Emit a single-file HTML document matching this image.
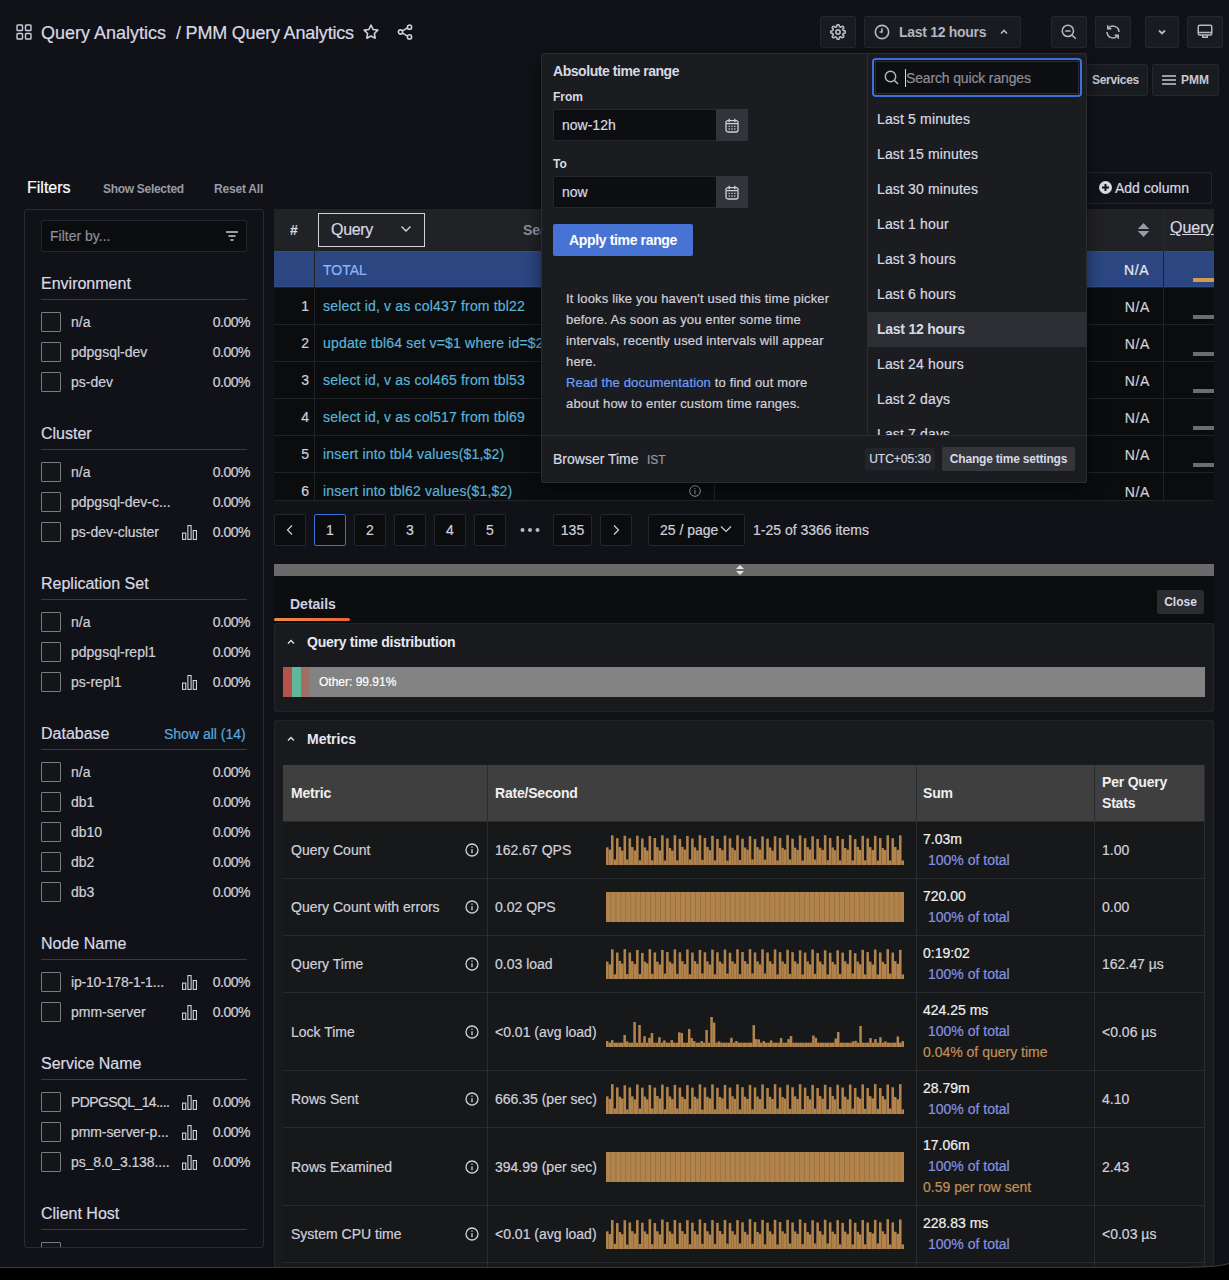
<!DOCTYPE html><html><head><meta charset="utf-8"><style>
*{box-sizing:border-box;margin:0;padding:0}
html,body{width:1229px;height:1280px;overflow:hidden;background:#111217;font-family:"Liberation Sans",sans-serif;color:#ccccdc;}
.a{position:absolute;white-space:nowrap}
.btn{position:absolute;background:#181b1f;border:1px solid #25272c;border-radius:2px}
svg{display:block;position:absolute}
.cb{position:absolute;width:20px;height:20px;border:1px solid #7a7b80;background:#141517;border-radius:1px}
.ft{position:absolute;font-size:14px;color:#d0d0da}
.pct{position:absolute;font-size:14px;color:#d0d0da;text-align:right;width:60px;letter-spacing:-0.5px}
.sh{position:absolute;font-size:16px;color:#d8d9e3}
.ul{position:absolute;height:1px;background:#3a3c42;width:206px;left:41px}
.pg{position:absolute;top:514px;height:32px;border:1px solid #25272c;background:#0b0c0e;border-radius:2px;font-size:14px;color:#d0d0da;text-align:center;line-height:30px}
.row{position:absolute;left:274px;width:940px;height:37px;border-top:1px solid #202226;background:#0b0c0e}
.q{position:absolute;left:49px;top:10px;font-size:14px;color:#5ab3d8;letter-spacing:0.18px}
.num{position:absolute;left:0;width:35px;text-align:right;top:10px;font-size:14px;color:#d0d0da}
.na{position:absolute;left:838px;width:38px;text-align:right;top:11px;font-size:14px;color:#d0d0da;letter-spacing:0.6px}
.mrow{position:absolute;left:283px;width:922px;border-top:1px solid #2a2b2e;background:#17181a}
.mt{position:absolute;font-size:14px;color:#d0d0da}
.qr{position:absolute;left:877px;font-size:14px;color:#d0d0da}
body *{-webkit-text-stroke:0.2px currentColor}
[style*="bold"]{-webkit-text-stroke:0}
</style></head><body>
<svg style="left:16px;top:24px" width="16" height="16" viewBox="0 0 16 16" fill="none" stroke="#ccccdc" stroke-width="1.4"><rect x="1" y="1" width="5.5" height="5.5" rx=".8"/><rect x="9.5" y="1" width="5.5" height="5.5" rx=".8"/><rect x="1" y="9.5" width="5.5" height="5.5" rx=".8"/><rect x="9.5" y="9.5" width="5.5" height="5.5" rx=".8"/></svg>
<div class="a" style="left:41px;top:23px;font-size:18px;color:#d8d9e3">Query Analytics</div>
<div class="a" style="left:176px;top:23px;font-size:18px;color:#d8d9e3;letter-spacing:-0.2px">/ PMM Query Analytics</div>
<svg style="left:362px;top:23px" width="18" height="18" viewBox="0 0 24 24" fill="none" stroke="#d0d0dc" stroke-width="2.1" stroke-linejoin="round"><path d="M12 2.8l2.8 5.8 6.3.9-4.6 4.5 1.1 6.3L12 17.3l-5.6 3 1.1-6.3L2.9 9.5l6.3-.9z"/></svg>
<svg style="left:396px;top:23px" width="18" height="18" viewBox="0 0 24 24" fill="none" stroke="#d0d0dc" stroke-width="2.1"><circle cx="18" cy="5.5" r="2.8"/><circle cx="6" cy="12" r="2.8"/><circle cx="18" cy="18.5" r="2.8"/><path d="M8.6 10.5l6.8-4M8.6 13.5l6.8 4"/></svg>
<div class="btn" style="left:820px;top:16px;width:36px;height:32px"></div>
<svg style="left:830px;top:24px" width="16" height="16" viewBox="0 0 24 24" fill="none" stroke="#b8b8c4" stroke-width="2.5"><circle cx="12" cy="12" r="3.2"/><path d="M19.4 15a1.7 1.7 0 0 0 .3 1.8l.1.1a2 2 0 1 1-2.8 2.8l-.1-.1a1.7 1.7 0 0 0-1.8-.3 1.7 1.7 0 0 0-1 1.5V21a2 2 0 1 1-4 0v-.1a1.7 1.7 0 0 0-1.1-1.5 1.7 1.7 0 0 0-1.8.3l-.1.1a2 2 0 1 1-2.8-2.8l.1-.1a1.7 1.7 0 0 0 .3-1.8 1.7 1.7 0 0 0-1.5-1H3a2 2 0 1 1 0-4h.1a1.7 1.7 0 0 0 1.5-1.1 1.7 1.7 0 0 0-.3-1.8l-.1-.1a2 2 0 1 1 2.8-2.8l.1.1a1.7 1.7 0 0 0 1.8.3H9a1.7 1.7 0 0 0 1-1.5V3a2 2 0 1 1 4 0v.1a1.7 1.7 0 0 0 1 1.5 1.7 1.7 0 0 0 1.8-.3l.1-.1a2 2 0 1 1 2.8 2.8l-.1.1a1.7 1.7 0 0 0-.3 1.8V9a1.7 1.7 0 0 0 1.5 1H21a2 2 0 1 1 0 4h-.1a1.7 1.7 0 0 0-1.5 1z"/></svg>
<div class="btn" style="left:864px;top:16px;width:157px;height:32px"></div>
<svg style="left:874px;top:24px" width="16" height="16" viewBox="0 0 24 24" fill="none" stroke="#b8b8c4" stroke-width="2.4"><circle cx="12" cy="12" r="10"/><path d="M12 6.5V12h-3.5"/></svg>
<div class="a" style="left:899px;top:24px;font-size:14px;font-weight:bold;color:#b4b4be;letter-spacing:-0.3px">Last 12 hours</div>
<svg style="left:998px;top:27px" width="12" height="10" viewBox="0 0 12 10" fill="none" stroke="#b8b8c4" stroke-width="1.6"><path d="M3 6.5l3-3 3 3"/></svg>
<div class="btn" style="left:1051px;top:16px;width:36px;height:32px"></div>
<svg style="left:1060px;top:23px" width="18" height="18" viewBox="0 0 24 24" fill="none" stroke="#b8b8c4" stroke-width="2"><circle cx="10.5" cy="10.5" r="7.5"/><path d="M7 10.5h7M16 16l5 5"/></svg>
<div class="btn" style="left:1095px;top:16px;width:36px;height:32px"></div>
<svg style="left:1104px;top:23px" width="18" height="18" viewBox="0 0 24 24" fill="none" stroke="#b8b8c4" stroke-width="2"><path d="M5.5 7.5A8 8 0 0 1 20 12M18.5 16.5A8 8 0 0 1 4 12"/><path d="M5 3v4.8h4.8M19 21v-4.8h-4.8"/></svg>
<div class="btn" style="left:1145px;top:16px;width:34px;height:32px"></div>
<svg style="left:1156px;top:27px" width="12" height="10" viewBox="0 0 12 10" fill="none" stroke="#b8b8c4" stroke-width="1.8"><path d="M3 3.5l3 3 3-3"/></svg>
<div class="btn" style="left:1187px;top:16px;width:36px;height:32px"></div>
<svg style="left:1196px;top:23px" width="18" height="18" viewBox="0 0 24 24" fill="none" stroke="#b8b8c4" stroke-width="2"><rect x="3" y="3" width="18" height="13" rx="2"/><path d="M3 12.5h18M9 16v3h6v-3"/></svg>
<div class="btn" style="left:1080px;top:64px;width:68px;height:32px"></div>
<div class="a" style="left:1092px;top:73px;font-size:12px;font-weight:bold;color:#c8c8d2;letter-spacing:-0.3px">Services</div>
<div class="btn" style="left:1152px;top:64px;width:67px;height:32px"></div>
<svg style="left:1162px;top:74px" width="14" height="12" viewBox="0 0 14 12" fill="none" stroke="#c8c8d2" stroke-width="1.4"><path d="M0 2h14M0 6h14M0 10h14"/></svg>
<div class="a" style="left:1181px;top:73px;font-size:12px;font-weight:bold;color:#c8c8d2">PMM</div>
<div class="a" style="left:27px;top:179px;font-size:16px;color:#fff">Filters</div>
<div class="a" style="left:103px;top:182px;font-size:12px;font-weight:bold;color:#9a9aa6;letter-spacing:-0.3px">Show Selected</div>
<div class="a" style="left:214px;top:182px;font-size:12px;font-weight:bold;color:#9a9aa6;letter-spacing:-0.2px">Reset All</div>
<div class="a" style="left:24px;top:209px;width:240px;height:1039px;border:1px solid #2a2b30;border-radius:3px;background:#111217;overflow:hidden">
<div class="a" style="left:16px;top:10px;width:206px;height:32px;border:1px solid #25272c;background:#0b0c0e;border-radius:2px"></div>
<div class="a" style="left:25px;top:18px;font-size:14px;color:#8e8e99">Filter by...</div>
<svg style="left:200px;top:20px" width="14" height="12" viewBox="0 0 14 12" fill="none" stroke="#ccccdc" stroke-width="1.4"><path d="M1 2h12M3.5 6h7M5.5 10h3"/></svg>
<div class="sh" style="left:16px;top:65px">Environment</div>
<div class="ul" style="left:16px;top:89px"></div>
<div class="cb" style="left:16px;top:102px"></div>
<div class="ft" style="left:46px;top:104px;letter-spacing:0px">n/a</div>
<div class="pct" style="left:165px;top:104px">0.00%</div>
<div class="cb" style="left:16px;top:132px"></div>
<div class="ft" style="left:46px;top:134px;letter-spacing:0px">pdpgsql-dev</div>
<div class="pct" style="left:165px;top:134px">0.00%</div>
<div class="cb" style="left:16px;top:162px"></div>
<div class="ft" style="left:46px;top:164px;letter-spacing:0px">ps-dev</div>
<div class="pct" style="left:165px;top:164px">0.00%</div>
<div class="sh" style="left:16px;top:215px">Cluster</div>
<div class="ul" style="left:16px;top:239px"></div>
<div class="cb" style="left:16px;top:252px"></div>
<div class="ft" style="left:46px;top:254px;letter-spacing:0px">n/a</div>
<div class="pct" style="left:165px;top:254px">0.00%</div>
<div class="cb" style="left:16px;top:282px"></div>
<div class="ft" style="left:46px;top:284px;letter-spacing:0px">pdpgsql-dev-c...</div>
<div class="pct" style="left:165px;top:284px">0.00%</div>
<div class="cb" style="left:16px;top:312px"></div>
<div class="ft" style="left:46px;top:314px;letter-spacing:0px">ps-dev-cluster</div>
<svg style="left:157px;top:315px" width="15" height="15" viewBox="0 0 15 15" fill="none" stroke="#d0d0da" stroke-width="1.1"><rect x="0.55" y="8.1" width="3.2" height="6.3"/><rect x="5.9" y="0.55" width="3.2" height="13.85"/><rect x="11.25" y="5.55" width="3.2" height="8.85"/></svg>
<div class="pct" style="left:165px;top:314px">0.00%</div>
<div class="sh" style="left:16px;top:365px">Replication Set</div>
<div class="ul" style="left:16px;top:389px"></div>
<div class="cb" style="left:16px;top:402px"></div>
<div class="ft" style="left:46px;top:404px;letter-spacing:0px">n/a</div>
<div class="pct" style="left:165px;top:404px">0.00%</div>
<div class="cb" style="left:16px;top:432px"></div>
<div class="ft" style="left:46px;top:434px;letter-spacing:0px">pdpgsql-repl1</div>
<div class="pct" style="left:165px;top:434px">0.00%</div>
<div class="cb" style="left:16px;top:462px"></div>
<div class="ft" style="left:46px;top:464px;letter-spacing:0px">ps-repl1</div>
<svg style="left:157px;top:465px" width="15" height="15" viewBox="0 0 15 15" fill="none" stroke="#d0d0da" stroke-width="1.1"><rect x="0.55" y="8.1" width="3.2" height="6.3"/><rect x="5.9" y="0.55" width="3.2" height="13.85"/><rect x="11.25" y="5.55" width="3.2" height="8.85"/></svg>
<div class="pct" style="left:165px;top:464px">0.00%</div>
<div class="sh" style="left:16px;top:515px">Database</div>
<div class="a" style="left:139px;top:516px;font-size:14px;color:#5aa8de">Show all (14)</div>
<div class="ul" style="left:16px;top:539px"></div>
<div class="cb" style="left:16px;top:552px"></div>
<div class="ft" style="left:46px;top:554px;letter-spacing:0px">n/a</div>
<div class="pct" style="left:165px;top:554px">0.00%</div>
<div class="cb" style="left:16px;top:582px"></div>
<div class="ft" style="left:46px;top:584px;letter-spacing:0px">db1</div>
<div class="pct" style="left:165px;top:584px">0.00%</div>
<div class="cb" style="left:16px;top:612px"></div>
<div class="ft" style="left:46px;top:614px;letter-spacing:0px">db10</div>
<div class="pct" style="left:165px;top:614px">0.00%</div>
<div class="cb" style="left:16px;top:642px"></div>
<div class="ft" style="left:46px;top:644px;letter-spacing:0px">db2</div>
<div class="pct" style="left:165px;top:644px">0.00%</div>
<div class="cb" style="left:16px;top:672px"></div>
<div class="ft" style="left:46px;top:674px;letter-spacing:0px">db3</div>
<div class="pct" style="left:165px;top:674px">0.00%</div>
<div class="sh" style="left:16px;top:725px">Node Name</div>
<div class="ul" style="left:16px;top:749px"></div>
<div class="cb" style="left:16px;top:762px"></div>
<div class="ft" style="left:46px;top:764px;letter-spacing:-0.18px">ip-10-178-1-1...</div>
<svg style="left:157px;top:765px" width="15" height="15" viewBox="0 0 15 15" fill="none" stroke="#d0d0da" stroke-width="1.1"><rect x="0.55" y="8.1" width="3.2" height="6.3"/><rect x="5.9" y="0.55" width="3.2" height="13.85"/><rect x="11.25" y="5.55" width="3.2" height="8.85"/></svg>
<div class="pct" style="left:165px;top:764px">0.00%</div>
<div class="cb" style="left:16px;top:792px"></div>
<div class="ft" style="left:46px;top:794px;letter-spacing:0px">pmm-server</div>
<svg style="left:157px;top:795px" width="15" height="15" viewBox="0 0 15 15" fill="none" stroke="#d0d0da" stroke-width="1.1"><rect x="0.55" y="8.1" width="3.2" height="6.3"/><rect x="5.9" y="0.55" width="3.2" height="13.85"/><rect x="11.25" y="5.55" width="3.2" height="8.85"/></svg>
<div class="pct" style="left:165px;top:794px">0.00%</div>
<div class="sh" style="left:16px;top:845px">Service Name</div>
<div class="ul" style="left:16px;top:869px"></div>
<div class="cb" style="left:16px;top:882px"></div>
<div class="ft" style="left:46px;top:884px;letter-spacing:-0.6px">PDPGSQL_14....</div>
<svg style="left:157px;top:885px" width="15" height="15" viewBox="0 0 15 15" fill="none" stroke="#d0d0da" stroke-width="1.1"><rect x="0.55" y="8.1" width="3.2" height="6.3"/><rect x="5.9" y="0.55" width="3.2" height="13.85"/><rect x="11.25" y="5.55" width="3.2" height="8.85"/></svg>
<div class="pct" style="left:165px;top:884px">0.00%</div>
<div class="cb" style="left:16px;top:912px"></div>
<div class="ft" style="left:46px;top:914px;letter-spacing:-0.08px">pmm-server-p...</div>
<svg style="left:157px;top:915px" width="15" height="15" viewBox="0 0 15 15" fill="none" stroke="#d0d0da" stroke-width="1.1"><rect x="0.55" y="8.1" width="3.2" height="6.3"/><rect x="5.9" y="0.55" width="3.2" height="13.85"/><rect x="11.25" y="5.55" width="3.2" height="8.85"/></svg>
<div class="pct" style="left:165px;top:914px">0.00%</div>
<div class="cb" style="left:16px;top:942px"></div>
<div class="ft" style="left:46px;top:944px;letter-spacing:-0.12px">ps_8.0_3.138....</div>
<svg style="left:157px;top:945px" width="15" height="15" viewBox="0 0 15 15" fill="none" stroke="#d0d0da" stroke-width="1.1"><rect x="0.55" y="8.1" width="3.2" height="6.3"/><rect x="5.9" y="0.55" width="3.2" height="13.85"/><rect x="11.25" y="5.55" width="3.2" height="8.85"/></svg>
<div class="pct" style="left:165px;top:944px">0.00%</div>
<div class="sh" style="left:16px;top:995px">Client Host</div>
<div class="ul" style="left:16px;top:1019px"></div>
<div class="cb" style="left:16px;top:1032px"></div>
<div class="pct" style="left:165px;top:1034px">0.00%</div>
</div>
<div class="btn" style="left:1086px;top:172px;width:126px;height:32px;background:#111217"></div>
<svg style="left:1099px;top:181px" width="13" height="13" viewBox="0 0 13 13"><circle cx="6.5" cy="6.5" r="6.5" fill="#d8d9e3"/><path d="M6.5 3v7M3 6.5h7" stroke="#111217" stroke-width="2"/></svg>
<div class="a" style="left:1115px;top:180px;font-size:14px;color:#d8d9e3">Add column</div>
<div class="a" style="left:0;top:0;width:1229px;height:501px;overflow:hidden">
<div class="a" style="left:274px;top:209px;width:940px;height:42px;background:#212226"></div>
<div class="a" style="left:290px;top:222px;font-size:14px;font-weight:bold;color:#d8d9e3">#</div>
<div class="a" style="left:318px;top:213px;width:107px;height:34px;border:1px solid #d0d0d8;background:#212226"></div>
<div class="a" style="left:331px;top:221px;font-size:16px;color:#d8d9e3;letter-spacing:-0.3px">Query</div>
<svg style="left:400px;top:224px" width="12" height="10" viewBox="0 0 12 10" fill="none" stroke="#d8d9e3" stroke-width="1.3"><path d="M1.5 2.5l4.5 4.5 4.5-4.5"/></svg>
<div class="a" style="left:523px;top:222px;font-size:14px;font-weight:bold;color:#8e8e99">Search</div>
<svg style="left:1137px;top:222px" width="13" height="16" viewBox="0 0 13 16" fill="#9a9aa4"><path d="M6.5 1l5.8 6H.7z"/><path d="M6.5 15l5.8-6H.7z"/></svg>
<div class="a" style="left:1170px;top:219px;font-size:16px;color:#d8d9e3;text-decoration:underline">Query</div>
<div class="a" style="left:1163px;top:209px;width:1px;height:42px;background:#28292d"></div>
<div class="a" style="left:274px;top:251px;width:940px;height:36px;background:#2b4680;border-top:1px solid #2f4d8e;border-bottom:1px solid #2f4d8e"></div>
<div class="a" style="left:323px;top:262px;font-size:14px;color:#8fb5ff">TOTAL</div>
<div class="a" style="left:1124px;top:262px;font-size:14px;color:#e8e8f0;letter-spacing:0.6px">N/A</div>
<div class="a" style="left:1193px;top:278px;width:21px;height:4px;background:#d39a52"></div>
<div class="row" style="top:287px">
<div class="num">1</div>
<div class="q">select id, v as col437 from tbl22</div>
<div class="na">N/A</div>
<div class="a" style="left:919px;top:27px;width:21px;height:4px;background:#6c6d70"></div>
</div>
<div class="row" style="top:324px">
<div class="num">2</div>
<div class="q">update tbl64 set v=$1 where id=$2</div>
<div class="na">N/A</div>
<div class="a" style="left:919px;top:27px;width:21px;height:4px;background:#6c6d70"></div>
</div>
<div class="row" style="top:361px">
<div class="num">3</div>
<div class="q">select id, v as col465 from tbl53</div>
<div class="na">N/A</div>
<div class="a" style="left:919px;top:27px;width:21px;height:4px;background:#6c6d70"></div>
</div>
<div class="row" style="top:398px">
<div class="num">4</div>
<div class="q">select id, v as col517 from tbl69</div>
<div class="na">N/A</div>
<div class="a" style="left:919px;top:27px;width:21px;height:4px;background:#6c6d70"></div>
</div>
<div class="row" style="top:435px">
<div class="num">5</div>
<div class="q">insert into tbl4 values($1,$2)</div>
<div class="na">N/A</div>
<div class="a" style="left:919px;top:27px;width:21px;height:4px;background:#6c6d70"></div>
</div>
<div class="row" style="top:472px">
<div class="num">6</div>
<div class="q">insert into tbl62 values($1,$2)</div>
<div class="na">N/A</div>
<div class="a" style="left:919px;top:27px;width:21px;height:4px;background:#6c6d70"></div>
</div>
<div class="a" style="left:314px;top:251px;width:1px;height:250px;background:#202226"></div>
<div class="a" style="left:1163px;top:251px;width:1px;height:250px;background:#202226"></div>
<div class="a" style="left:714px;top:472px;width:1px;height:29px;background:#202226"></div>
<svg style="left:689px;top:485px" width="12" height="12" viewBox="0 0 12 12" fill="none" stroke="#9a9aa6" stroke-width="1"><circle cx="6" cy="6" r="5.3"/><path d="M6 5v4M6 3v1"/></svg>
<div class="a" style="left:274px;top:500px;width:940px;height:1px;background:#202226"></div>
</div>
<div class="pg" style="left:274px;width:32px;"></div>
<div class="pg" style="left:314px;width:32px;border-color:#3d71d9;">1</div>
<div class="pg" style="left:354px;width:32px;">2</div>
<div class="pg" style="left:394px;width:32px;">3</div>
<div class="pg" style="left:434px;width:32px;">4</div>
<div class="pg" style="left:474px;width:32px;">5</div>
<div class="pg" style="left:553px;width:39px;">135</div>
<div class="pg" style="left:600px;width:32px;"></div>
<svg style="left:285px;top:524px" width="10" height="12" viewBox="0 0 10 12" fill="none" stroke="#d0d0da" stroke-width="1.2"><path d="M7 1.5L2.5 6 7 10.5"/></svg>
<svg style="left:611px;top:524px" width="10" height="12" viewBox="0 0 10 12" fill="none" stroke="#d0d0da" stroke-width="1.2"><path d="M3 1.5L7.5 6 3 10.5"/></svg>
<svg style="left:520px;top:527px" width="20" height="6" viewBox="0 0 20 6" fill="#b8b8c4"><circle cx="2.5" cy="3" r="2"/><circle cx="10" cy="3" r="2"/><circle cx="17.5" cy="3" r="2"/></svg>
<div class="pg" style="left:648px;width:97px;text-align:left;padding-left:11px">25 / page</div>
<svg style="left:720px;top:524px" width="12" height="10" viewBox="0 0 12 10" fill="none" stroke="#d0d0da" stroke-width="1.2"><path d="M1 2.5l5 5 5-5"/></svg>
<div class="a" style="left:753px;top:522px;font-size:14px;color:#d0d0da">1-25 of 3366 items</div>
<div class="a" style="left:274px;top:564px;width:940px;height:12px;background:#6a6a6a"></div>
<svg style="left:735px;top:564px" width="10" height="12" viewBox="0 0 10 12" fill="#e0e0e0"><path d="M5 1l4 4H1zM5 11l4-4H1z"/></svg>
<div class="a" style="left:274px;top:576px;width:940px;height:47px;background:#0c0d0f"></div>
<div class="a" style="left:290px;top:596px;font-size:14px;font-weight:bold;color:#d0d0e4">Details</div>
<div class="a" style="left:274px;top:618px;width:76px;height:3px;border-radius:2px;background:linear-gradient(90deg,#f38a45,#e8643e)"></div>
<div class="a" style="left:1157px;top:590px;width:47px;height:24px;background:#2a2c31;border-radius:2px;font-size:12px;font-weight:bold;color:#d8d9e3;text-align:center;line-height:24px">Close</div>
<div class="a" style="left:274px;top:623px;width:940px;height:89px;background:#181a1e;border:1px solid #222429;border-radius:2px"></div>
<svg style="left:286px;top:638px" width="10" height="8" viewBox="0 0 10 8" fill="none" stroke="#d8d9e3" stroke-width="1.5"><path d="M2 5.5l3-3 3 3"/></svg>
<div class="a" style="left:307px;top:634px;font-size:14px;font-weight:bold;color:#e8e8f0;letter-spacing:-0.25px">Query time distribution</div>
<div class="a" style="left:283px;top:667px;width:922px;height:30px;background:#838383"></div>
<div class="a" style="left:283px;top:667px;width:9px;height:30px;background:#b5524c"></div>
<div class="a" style="left:292px;top:667px;width:9px;height:30px;background:#5fb89a"></div>
<div class="a" style="left:301px;top:667px;width:9px;height:30px;background:#a07068"></div>
<div class="a" style="left:319px;top:675px;font-size:12px;color:#fff">Other: 99.91%</div>
<div class="a" style="left:274px;top:720px;width:940px;height:600px;background:#181a1e;border:1px solid #222429;border-radius:2px"></div>
<svg style="left:286px;top:735px" width="10" height="8" viewBox="0 0 10 8" fill="none" stroke="#d8d9e3" stroke-width="1.5"><path d="M2 5.5l3-3 3 3"/></svg>
<div class="a" style="left:307px;top:731px;font-size:14px;font-weight:bold;color:#e8e8f0">Metrics</div>
<div class="a" style="left:283px;top:765px;width:922px;height:57px;background:#3f3f3f"></div>
<div class="a" style="left:291px;top:785px;font-size:14px;font-weight:bold;color:#f0f0f0;letter-spacing:-0.2px">Metric</div>
<div class="a" style="left:495px;top:785px;font-size:14px;font-weight:bold;color:#f0f0f0;letter-spacing:-0.2px">Rate/Second</div>
<div class="a" style="left:923px;top:785px;font-size:14px;font-weight:bold;color:#f0f0f0;letter-spacing:-0.2px">Sum</div>
<div class="a" style="left:1102px;top:772px;font-size:14px;font-weight:bold;color:#f0f0f0;line-height:21px;letter-spacing:-0.2px">Per Query<br>Stats</div>
<div class="mrow" style="top:821px;height:57px"></div>
<div class="mt" style="left:291px;top:842px">Query Count</div>
<svg style="left:465px;top:843px" width="14" height="14" viewBox="0 0 14 14" fill="none" stroke="#d0d0da" stroke-width="1.3"><circle cx="7" cy="7" r="6"/><path d="M7 6.2v4M7 3.6v1.2"/></svg>
<div class="mt" style="left:495px;top:842px">162.67 QPS</div>
<svg style="left:606px;top:835px" width="298" height="30" viewBox="0 0 298 30"><rect x="0.000" y="12.35" width="2.554" height="17.65" fill="#b2844c"/><rect x="2.504" y="14.71" width="2.554" height="15.29" fill="#b2844c"/><rect x="5.008" y="0.35" width="2.554" height="29.65" fill="#b2844c"/><rect x="7.513" y="24.47" width="2.554" height="5.53" fill="#b2844c"/><rect x="10.017" y="3.21" width="2.554" height="26.79" fill="#b2844c"/><rect x="12.521" y="11.99" width="2.554" height="18.01" fill="#b2844c"/><rect x="15.025" y="15.57" width="2.554" height="14.43" fill="#b2844c"/><rect x="17.529" y="0.74" width="2.554" height="29.26" fill="#b2844c"/><rect x="20.034" y="24.47" width="2.554" height="5.53" fill="#b2844c"/><rect x="22.538" y="3.32" width="2.554" height="26.68" fill="#b2844c"/><rect x="25.042" y="12.02" width="2.554" height="17.98" fill="#b2844c"/><rect x="27.546" y="15.46" width="2.554" height="14.54" fill="#b2844c"/><rect x="30.050" y="0.74" width="2.554" height="29.26" fill="#b2844c"/><rect x="32.555" y="25.30" width="2.554" height="4.70" fill="#b2844c"/><rect x="35.059" y="3.45" width="2.554" height="26.55" fill="#b2844c"/><rect x="37.563" y="12.41" width="2.554" height="17.59" fill="#b2844c"/><rect x="40.067" y="15.58" width="2.554" height="14.42" fill="#b2844c"/><rect x="42.571" y="1.04" width="2.554" height="28.96" fill="#b2844c"/><rect x="45.076" y="25.26" width="2.554" height="4.74" fill="#b2844c"/><rect x="47.580" y="3.00" width="2.554" height="27.00" fill="#b2844c"/><rect x="50.084" y="12.18" width="2.554" height="17.82" fill="#b2844c"/><rect x="52.588" y="15.41" width="2.554" height="14.59" fill="#b2844c"/><rect x="55.092" y="0.34" width="2.554" height="29.66" fill="#b2844c"/><rect x="57.597" y="25.43" width="2.554" height="4.57" fill="#b2844c"/><rect x="60.101" y="3.36" width="2.554" height="26.64" fill="#b2844c"/><rect x="62.605" y="12.95" width="2.554" height="17.05" fill="#b2844c"/><rect x="65.109" y="15.60" width="2.554" height="14.40" fill="#b2844c"/><rect x="67.613" y="0.25" width="2.554" height="29.75" fill="#b2844c"/><rect x="70.118" y="25.35" width="2.554" height="4.65" fill="#b2844c"/><rect x="72.622" y="3.84" width="2.554" height="26.16" fill="#b2844c"/><rect x="75.126" y="11.92" width="2.554" height="18.08" fill="#b2844c"/><rect x="77.630" y="14.55" width="2.554" height="15.45" fill="#b2844c"/><rect x="80.134" y="0.95" width="2.554" height="29.05" fill="#b2844c"/><rect x="82.639" y="24.45" width="2.554" height="5.55" fill="#b2844c"/><rect x="85.143" y="3.45" width="2.554" height="26.55" fill="#b2844c"/><rect x="87.647" y="12.29" width="2.554" height="17.71" fill="#b2844c"/><rect x="90.151" y="15.35" width="2.554" height="14.65" fill="#b2844c"/><rect x="92.655" y="0.17" width="2.554" height="29.83" fill="#b2844c"/><rect x="95.160" y="24.77" width="2.554" height="5.23" fill="#b2844c"/><rect x="97.664" y="2.94" width="2.554" height="27.06" fill="#b2844c"/><rect x="100.168" y="12.03" width="2.554" height="17.97" fill="#b2844c"/><rect x="102.672" y="15.24" width="2.554" height="14.76" fill="#b2844c"/><rect x="105.176" y="0.87" width="2.554" height="29.13" fill="#b2844c"/><rect x="107.681" y="25.40" width="2.554" height="4.60" fill="#b2844c"/><rect x="110.185" y="3.93" width="2.554" height="26.07" fill="#b2844c"/><rect x="112.689" y="13.02" width="2.554" height="16.98" fill="#b2844c"/><rect x="115.193" y="15.24" width="2.554" height="14.76" fill="#b2844c"/><rect x="117.697" y="0.58" width="2.554" height="29.42" fill="#b2844c"/><rect x="120.202" y="25.60" width="2.554" height="4.40" fill="#b2844c"/><rect x="122.706" y="3.29" width="2.554" height="26.71" fill="#b2844c"/><rect x="125.210" y="12.69" width="2.554" height="17.31" fill="#b2844c"/><rect x="127.714" y="15.23" width="2.554" height="14.77" fill="#b2844c"/><rect x="130.218" y="0.32" width="2.554" height="29.68" fill="#b2844c"/><rect x="132.723" y="25.02" width="2.554" height="4.98" fill="#b2844c"/><rect x="135.227" y="3.72" width="2.554" height="26.28" fill="#b2844c"/><rect x="137.731" y="12.52" width="2.554" height="17.48" fill="#b2844c"/><rect x="140.235" y="14.75" width="2.554" height="15.25" fill="#b2844c"/><rect x="142.739" y="1.23" width="2.554" height="28.77" fill="#b2844c"/><rect x="145.244" y="24.43" width="2.554" height="5.57" fill="#b2844c"/><rect x="147.748" y="4.07" width="2.554" height="25.93" fill="#b2844c"/><rect x="150.252" y="12.20" width="2.554" height="17.80" fill="#b2844c"/><rect x="152.756" y="14.59" width="2.554" height="15.41" fill="#b2844c"/><rect x="155.261" y="1.28" width="2.554" height="28.72" fill="#b2844c"/><rect x="157.765" y="24.65" width="2.554" height="5.35" fill="#b2844c"/><rect x="160.269" y="3.66" width="2.554" height="26.34" fill="#b2844c"/><rect x="162.773" y="12.41" width="2.554" height="17.59" fill="#b2844c"/><rect x="165.277" y="15.59" width="2.554" height="14.41" fill="#b2844c"/><rect x="167.782" y="1.24" width="2.554" height="28.76" fill="#b2844c"/><rect x="170.286" y="25.38" width="2.554" height="4.62" fill="#b2844c"/><rect x="172.790" y="2.95" width="2.554" height="27.05" fill="#b2844c"/><rect x="175.294" y="12.86" width="2.554" height="17.14" fill="#b2844c"/><rect x="177.798" y="14.69" width="2.554" height="15.31" fill="#b2844c"/><rect x="180.303" y="0.18" width="2.554" height="29.82" fill="#b2844c"/><rect x="182.807" y="24.47" width="2.554" height="5.53" fill="#b2844c"/><rect x="185.311" y="3.69" width="2.554" height="26.31" fill="#b2844c"/><rect x="187.815" y="12.67" width="2.554" height="17.33" fill="#b2844c"/><rect x="190.319" y="14.97" width="2.554" height="15.03" fill="#b2844c"/><rect x="192.824" y="0.37" width="2.554" height="29.63" fill="#b2844c"/><rect x="195.328" y="25.47" width="2.554" height="4.53" fill="#b2844c"/><rect x="197.832" y="3.20" width="2.554" height="26.80" fill="#b2844c"/><rect x="200.336" y="12.14" width="2.554" height="17.86" fill="#b2844c"/><rect x="202.840" y="14.57" width="2.554" height="15.43" fill="#b2844c"/><rect x="205.345" y="1.26" width="2.554" height="28.74" fill="#b2844c"/><rect x="207.849" y="24.47" width="2.554" height="5.53" fill="#b2844c"/><rect x="210.353" y="3.99" width="2.554" height="26.01" fill="#b2844c"/><rect x="212.857" y="12.69" width="2.554" height="17.31" fill="#b2844c"/><rect x="215.361" y="14.87" width="2.554" height="15.13" fill="#b2844c"/><rect x="217.866" y="0.20" width="2.554" height="29.80" fill="#b2844c"/><rect x="220.370" y="25.19" width="2.554" height="4.81" fill="#b2844c"/><rect x="222.874" y="2.99" width="2.554" height="27.01" fill="#b2844c"/><rect x="225.378" y="12.45" width="2.554" height="17.55" fill="#b2844c"/><rect x="227.882" y="15.23" width="2.554" height="14.77" fill="#b2844c"/><rect x="230.387" y="0.92" width="2.554" height="29.08" fill="#b2844c"/><rect x="232.891" y="25.39" width="2.554" height="4.61" fill="#b2844c"/><rect x="235.395" y="4.01" width="2.554" height="25.99" fill="#b2844c"/><rect x="237.899" y="12.92" width="2.554" height="17.08" fill="#b2844c"/><rect x="240.403" y="14.77" width="2.554" height="15.23" fill="#b2844c"/><rect x="242.908" y="0.10" width="2.554" height="29.90" fill="#b2844c"/><rect x="245.412" y="25.41" width="2.554" height="4.59" fill="#b2844c"/><rect x="247.916" y="4.04" width="2.554" height="25.96" fill="#b2844c"/><rect x="250.420" y="11.92" width="2.554" height="18.08" fill="#b2844c"/><rect x="252.924" y="14.96" width="2.554" height="15.04" fill="#b2844c"/><rect x="255.429" y="0.81" width="2.554" height="29.19" fill="#b2844c"/><rect x="257.933" y="25.32" width="2.554" height="4.68" fill="#b2844c"/><rect x="260.437" y="3.39" width="2.554" height="26.61" fill="#b2844c"/><rect x="262.941" y="12.11" width="2.554" height="17.89" fill="#b2844c"/><rect x="265.445" y="15.05" width="2.554" height="14.95" fill="#b2844c"/><rect x="267.950" y="0.79" width="2.554" height="29.21" fill="#b2844c"/><rect x="270.454" y="25.53" width="2.554" height="4.47" fill="#b2844c"/><rect x="272.958" y="3.00" width="2.554" height="27.00" fill="#b2844c"/><rect x="275.462" y="13.06" width="2.554" height="16.94" fill="#b2844c"/><rect x="277.966" y="15.01" width="2.554" height="14.99" fill="#b2844c"/><rect x="280.471" y="0.29" width="2.554" height="29.71" fill="#b2844c"/><rect x="282.975" y="25.44" width="2.554" height="4.56" fill="#b2844c"/><rect x="285.479" y="3.22" width="2.554" height="26.78" fill="#b2844c"/><rect x="287.983" y="11.96" width="2.554" height="18.04" fill="#b2844c"/><rect x="290.487" y="14.84" width="2.554" height="15.16" fill="#b2844c"/><rect x="292.992" y="0.35" width="2.554" height="29.65" fill="#b2844c"/><rect x="295.496" y="25.47" width="2.554" height="4.53" fill="#b2844c"/></svg>
<div class="mt" style="left:923px;top:829px;line-height:21px;color:#f0f0f0">7.03m<br><span style="color:#8592e0;padding-left:5px">100% of total</span></div>
<div class="mt" style="left:1102px;top:842px">1.00</div>
<div class="mrow" style="top:878px;height:57px"></div>
<div class="mt" style="left:291px;top:899px">Query Count with errors</div>
<svg style="left:465px;top:900px" width="14" height="14" viewBox="0 0 14 14" fill="none" stroke="#d0d0da" stroke-width="1.3"><circle cx="7" cy="7" r="6"/><path d="M7 6.2v4M7 3.6v1.2"/></svg>
<div class="mt" style="left:495px;top:899px">0.02 QPS</div>
<svg style="left:606px;top:892px" width="298" height="30" viewBox="0 0 298 30"><rect x="0" y="0" width="298" height="30" fill="#b2844c"/><rect x="4.62" y="0" width="0.7" height="30" fill="#8e6c42"/><rect x="9.58" y="0" width="0.7" height="30" fill="#8e6c42"/><rect x="14.55" y="0" width="0.7" height="30" fill="#8e6c42"/><rect x="19.52" y="0" width="0.7" height="30" fill="#8e6c42"/><rect x="24.48" y="0" width="0.7" height="30" fill="#8e6c42"/><rect x="29.45" y="0" width="0.7" height="30" fill="#8e6c42"/><rect x="34.42" y="0" width="0.7" height="30" fill="#8e6c42"/><rect x="39.38" y="0" width="0.7" height="30" fill="#8e6c42"/><rect x="44.35" y="0" width="0.7" height="30" fill="#8e6c42"/><rect x="49.32" y="0" width="0.7" height="30" fill="#8e6c42"/><rect x="54.28" y="0" width="0.7" height="30" fill="#8e6c42"/><rect x="59.25" y="0" width="0.7" height="30" fill="#8e6c42"/><rect x="64.22" y="0" width="0.7" height="30" fill="#8e6c42"/><rect x="69.18" y="0" width="0.7" height="30" fill="#8e6c42"/><rect x="74.15" y="0" width="0.7" height="30" fill="#8e6c42"/><rect x="79.12" y="0" width="0.7" height="30" fill="#8e6c42"/><rect x="84.08" y="0" width="0.7" height="30" fill="#8e6c42"/><rect x="89.05" y="0" width="0.7" height="30" fill="#8e6c42"/><rect x="94.02" y="0" width="0.7" height="30" fill="#8e6c42"/><rect x="98.98" y="0" width="0.7" height="30" fill="#8e6c42"/><rect x="103.95" y="0" width="0.7" height="30" fill="#8e6c42"/><rect x="108.92" y="0" width="0.7" height="30" fill="#8e6c42"/><rect x="113.88" y="0" width="0.7" height="30" fill="#8e6c42"/><rect x="118.85" y="0" width="0.7" height="30" fill="#8e6c42"/><rect x="123.82" y="0" width="0.7" height="30" fill="#8e6c42"/><rect x="128.78" y="0" width="0.7" height="30" fill="#8e6c42"/><rect x="133.75" y="0" width="0.7" height="30" fill="#8e6c42"/><rect x="138.72" y="0" width="0.7" height="30" fill="#8e6c42"/><rect x="143.68" y="0" width="0.7" height="30" fill="#8e6c42"/><rect x="148.65" y="0" width="0.7" height="30" fill="#8e6c42"/><rect x="153.62" y="0" width="0.7" height="30" fill="#8e6c42"/><rect x="158.58" y="0" width="0.7" height="30" fill="#8e6c42"/><rect x="163.55" y="0" width="0.7" height="30" fill="#8e6c42"/><rect x="168.52" y="0" width="0.7" height="30" fill="#8e6c42"/><rect x="173.48" y="0" width="0.7" height="30" fill="#8e6c42"/><rect x="178.45" y="0" width="0.7" height="30" fill="#8e6c42"/><rect x="183.42" y="0" width="0.7" height="30" fill="#8e6c42"/><rect x="188.38" y="0" width="0.7" height="30" fill="#8e6c42"/><rect x="193.35" y="0" width="0.7" height="30" fill="#8e6c42"/><rect x="198.32" y="0" width="0.7" height="30" fill="#8e6c42"/><rect x="203.28" y="0" width="0.7" height="30" fill="#8e6c42"/><rect x="208.25" y="0" width="0.7" height="30" fill="#8e6c42"/><rect x="213.22" y="0" width="0.7" height="30" fill="#8e6c42"/><rect x="218.18" y="0" width="0.7" height="30" fill="#8e6c42"/><rect x="223.15" y="0" width="0.7" height="30" fill="#8e6c42"/><rect x="228.12" y="0" width="0.7" height="30" fill="#8e6c42"/><rect x="233.08" y="0" width="0.7" height="30" fill="#8e6c42"/><rect x="238.05" y="0" width="0.7" height="30" fill="#8e6c42"/><rect x="243.02" y="0" width="0.7" height="30" fill="#8e6c42"/><rect x="247.98" y="0" width="0.7" height="30" fill="#8e6c42"/><rect x="252.95" y="0" width="0.7" height="30" fill="#8e6c42"/><rect x="257.92" y="0" width="0.7" height="30" fill="#8e6c42"/><rect x="262.88" y="0" width="0.7" height="30" fill="#8e6c42"/><rect x="267.85" y="0" width="0.7" height="30" fill="#8e6c42"/><rect x="272.82" y="0" width="0.7" height="30" fill="#8e6c42"/><rect x="277.78" y="0" width="0.7" height="30" fill="#8e6c42"/><rect x="282.75" y="0" width="0.7" height="30" fill="#8e6c42"/><rect x="287.72" y="0" width="0.7" height="30" fill="#8e6c42"/><rect x="292.68" y="0" width="0.7" height="30" fill="#8e6c42"/></svg>
<div class="mt" style="left:923px;top:886px;line-height:21px;color:#f0f0f0">720.00<br><span style="color:#8592e0;padding-left:5px">100% of total</span></div>
<div class="mt" style="left:1102px;top:899px">0.00</div>
<div class="mrow" style="top:935px;height:57px"></div>
<div class="mt" style="left:291px;top:956px">Query Time</div>
<svg style="left:465px;top:957px" width="14" height="14" viewBox="0 0 14 14" fill="none" stroke="#d0d0da" stroke-width="1.3"><circle cx="7" cy="7" r="6"/><path d="M7 6.2v4M7 3.6v1.2"/></svg>
<div class="mt" style="left:495px;top:956px">0.03 load</div>
<svg style="left:606px;top:949px" width="298" height="30" viewBox="0 0 298 30"><rect x="0.000" y="12.58" width="2.554" height="17.42" fill="#b2844c"/><rect x="2.504" y="15.42" width="2.554" height="14.58" fill="#b2844c"/><rect x="5.008" y="0.29" width="2.554" height="29.71" fill="#b2844c"/><rect x="7.513" y="25.25" width="2.554" height="4.75" fill="#b2844c"/><rect x="10.017" y="3.56" width="2.554" height="26.44" fill="#b2844c"/><rect x="12.521" y="11.90" width="2.554" height="18.10" fill="#b2844c"/><rect x="15.025" y="14.58" width="2.554" height="15.42" fill="#b2844c"/><rect x="17.529" y="0.13" width="2.554" height="29.87" fill="#b2844c"/><rect x="20.034" y="25.06" width="2.554" height="4.94" fill="#b2844c"/><rect x="22.538" y="3.51" width="2.554" height="26.49" fill="#b2844c"/><rect x="25.042" y="12.22" width="2.554" height="17.78" fill="#b2844c"/><rect x="27.546" y="15.03" width="2.554" height="14.97" fill="#b2844c"/><rect x="30.050" y="0.95" width="2.554" height="29.05" fill="#b2844c"/><rect x="32.555" y="25.12" width="2.554" height="4.88" fill="#b2844c"/><rect x="35.059" y="3.92" width="2.554" height="26.08" fill="#b2844c"/><rect x="37.563" y="12.65" width="2.554" height="17.35" fill="#b2844c"/><rect x="40.067" y="14.41" width="2.554" height="15.59" fill="#b2844c"/><rect x="42.571" y="0.15" width="2.554" height="29.85" fill="#b2844c"/><rect x="45.076" y="24.85" width="2.554" height="5.15" fill="#b2844c"/><rect x="47.580" y="3.50" width="2.554" height="26.50" fill="#b2844c"/><rect x="50.084" y="12.69" width="2.554" height="17.31" fill="#b2844c"/><rect x="52.588" y="15.49" width="2.554" height="14.51" fill="#b2844c"/><rect x="55.092" y="0.97" width="2.554" height="29.03" fill="#b2844c"/><rect x="57.597" y="24.66" width="2.554" height="5.34" fill="#b2844c"/><rect x="60.101" y="3.06" width="2.554" height="26.94" fill="#b2844c"/><rect x="62.605" y="12.67" width="2.554" height="17.33" fill="#b2844c"/><rect x="65.109" y="14.66" width="2.554" height="15.34" fill="#b2844c"/><rect x="67.613" y="0.37" width="2.554" height="29.63" fill="#b2844c"/><rect x="70.118" y="24.77" width="2.554" height="5.23" fill="#b2844c"/><rect x="72.622" y="3.30" width="2.554" height="26.70" fill="#b2844c"/><rect x="75.126" y="12.19" width="2.554" height="17.81" fill="#b2844c"/><rect x="77.630" y="15.16" width="2.554" height="14.84" fill="#b2844c"/><rect x="80.134" y="0.45" width="2.554" height="29.55" fill="#b2844c"/><rect x="82.639" y="25.26" width="2.554" height="4.74" fill="#b2844c"/><rect x="85.143" y="3.52" width="2.554" height="26.48" fill="#b2844c"/><rect x="87.647" y="12.18" width="2.554" height="17.82" fill="#b2844c"/><rect x="90.151" y="14.77" width="2.554" height="15.23" fill="#b2844c"/><rect x="92.655" y="0.95" width="2.554" height="29.05" fill="#b2844c"/><rect x="95.160" y="24.47" width="2.554" height="5.53" fill="#b2844c"/><rect x="97.664" y="3.32" width="2.554" height="26.68" fill="#b2844c"/><rect x="100.168" y="12.40" width="2.554" height="17.60" fill="#b2844c"/><rect x="102.672" y="15.59" width="2.554" height="14.41" fill="#b2844c"/><rect x="105.176" y="0.64" width="2.554" height="29.36" fill="#b2844c"/><rect x="107.681" y="25.30" width="2.554" height="4.70" fill="#b2844c"/><rect x="110.185" y="3.29" width="2.554" height="26.71" fill="#b2844c"/><rect x="112.689" y="12.54" width="2.554" height="17.46" fill="#b2844c"/><rect x="115.193" y="14.62" width="2.554" height="15.38" fill="#b2844c"/><rect x="117.697" y="0.52" width="2.554" height="29.48" fill="#b2844c"/><rect x="120.202" y="24.64" width="2.554" height="5.36" fill="#b2844c"/><rect x="122.706" y="3.68" width="2.554" height="26.32" fill="#b2844c"/><rect x="125.210" y="12.33" width="2.554" height="17.67" fill="#b2844c"/><rect x="127.714" y="14.71" width="2.554" height="15.29" fill="#b2844c"/><rect x="130.218" y="0.31" width="2.554" height="29.69" fill="#b2844c"/><rect x="132.723" y="25.18" width="2.554" height="4.82" fill="#b2844c"/><rect x="135.227" y="3.09" width="2.554" height="26.91" fill="#b2844c"/><rect x="137.731" y="12.06" width="2.554" height="17.94" fill="#b2844c"/><rect x="140.235" y="14.77" width="2.554" height="15.23" fill="#b2844c"/><rect x="142.739" y="0.13" width="2.554" height="29.87" fill="#b2844c"/><rect x="145.244" y="24.45" width="2.554" height="5.55" fill="#b2844c"/><rect x="147.748" y="3.48" width="2.554" height="26.52" fill="#b2844c"/><rect x="150.252" y="12.46" width="2.554" height="17.54" fill="#b2844c"/><rect x="152.756" y="15.40" width="2.554" height="14.60" fill="#b2844c"/><rect x="155.261" y="0.30" width="2.554" height="29.70" fill="#b2844c"/><rect x="157.765" y="24.48" width="2.554" height="5.52" fill="#b2844c"/><rect x="160.269" y="3.53" width="2.554" height="26.47" fill="#b2844c"/><rect x="162.773" y="12.27" width="2.554" height="17.73" fill="#b2844c"/><rect x="165.277" y="14.74" width="2.554" height="15.26" fill="#b2844c"/><rect x="167.782" y="0.42" width="2.554" height="29.58" fill="#b2844c"/><rect x="170.286" y="25.39" width="2.554" height="4.61" fill="#b2844c"/><rect x="172.790" y="3.16" width="2.554" height="26.84" fill="#b2844c"/><rect x="175.294" y="12.40" width="2.554" height="17.60" fill="#b2844c"/><rect x="177.798" y="14.80" width="2.554" height="15.20" fill="#b2844c"/><rect x="180.303" y="0.80" width="2.554" height="29.20" fill="#b2844c"/><rect x="182.807" y="24.85" width="2.554" height="5.15" fill="#b2844c"/><rect x="185.311" y="3.17" width="2.554" height="26.83" fill="#b2844c"/><rect x="187.815" y="12.34" width="2.554" height="17.66" fill="#b2844c"/><rect x="190.319" y="14.74" width="2.554" height="15.26" fill="#b2844c"/><rect x="192.824" y="1.27" width="2.554" height="28.73" fill="#b2844c"/><rect x="195.328" y="25.41" width="2.554" height="4.59" fill="#b2844c"/><rect x="197.832" y="3.57" width="2.554" height="26.43" fill="#b2844c"/><rect x="200.336" y="12.32" width="2.554" height="17.68" fill="#b2844c"/><rect x="202.840" y="15.34" width="2.554" height="14.66" fill="#b2844c"/><rect x="205.345" y="0.48" width="2.554" height="29.52" fill="#b2844c"/><rect x="207.849" y="24.84" width="2.554" height="5.16" fill="#b2844c"/><rect x="210.353" y="4.05" width="2.554" height="25.95" fill="#b2844c"/><rect x="212.857" y="12.53" width="2.554" height="17.47" fill="#b2844c"/><rect x="215.361" y="15.33" width="2.554" height="14.67" fill="#b2844c"/><rect x="217.866" y="1.24" width="2.554" height="28.76" fill="#b2844c"/><rect x="220.370" y="25.44" width="2.554" height="4.56" fill="#b2844c"/><rect x="222.874" y="3.72" width="2.554" height="26.28" fill="#b2844c"/><rect x="225.378" y="12.88" width="2.554" height="17.12" fill="#b2844c"/><rect x="227.882" y="15.37" width="2.554" height="14.63" fill="#b2844c"/><rect x="230.387" y="1.26" width="2.554" height="28.74" fill="#b2844c"/><rect x="232.891" y="25.04" width="2.554" height="4.96" fill="#b2844c"/><rect x="235.395" y="3.64" width="2.554" height="26.36" fill="#b2844c"/><rect x="237.899" y="12.37" width="2.554" height="17.63" fill="#b2844c"/><rect x="240.403" y="14.89" width="2.554" height="15.11" fill="#b2844c"/><rect x="242.908" y="1.01" width="2.554" height="28.99" fill="#b2844c"/><rect x="245.412" y="24.52" width="2.554" height="5.48" fill="#b2844c"/><rect x="247.916" y="4.10" width="2.554" height="25.90" fill="#b2844c"/><rect x="250.420" y="12.61" width="2.554" height="17.39" fill="#b2844c"/><rect x="252.924" y="15.27" width="2.554" height="14.73" fill="#b2844c"/><rect x="255.429" y="0.81" width="2.554" height="29.19" fill="#b2844c"/><rect x="257.933" y="25.46" width="2.554" height="4.54" fill="#b2844c"/><rect x="260.437" y="3.10" width="2.554" height="26.90" fill="#b2844c"/><rect x="262.941" y="12.65" width="2.554" height="17.35" fill="#b2844c"/><rect x="265.445" y="15.56" width="2.554" height="14.44" fill="#b2844c"/><rect x="267.950" y="0.56" width="2.554" height="29.44" fill="#b2844c"/><rect x="270.454" y="25.49" width="2.554" height="4.51" fill="#b2844c"/><rect x="272.958" y="3.45" width="2.554" height="26.55" fill="#b2844c"/><rect x="275.462" y="12.69" width="2.554" height="17.31" fill="#b2844c"/><rect x="277.966" y="14.90" width="2.554" height="15.10" fill="#b2844c"/><rect x="280.471" y="0.15" width="2.554" height="29.85" fill="#b2844c"/><rect x="282.975" y="24.62" width="2.554" height="5.38" fill="#b2844c"/><rect x="285.479" y="3.60" width="2.554" height="26.40" fill="#b2844c"/><rect x="287.983" y="12.12" width="2.554" height="17.88" fill="#b2844c"/><rect x="290.487" y="14.83" width="2.554" height="15.17" fill="#b2844c"/><rect x="292.992" y="0.86" width="2.554" height="29.14" fill="#b2844c"/><rect x="295.496" y="25.43" width="2.554" height="4.57" fill="#b2844c"/></svg>
<div class="mt" style="left:923px;top:943px;line-height:21px;color:#f0f0f0">0:19:02<br><span style="color:#8592e0;padding-left:5px">100% of total</span></div>
<div class="mt" style="left:1102px;top:956px">162.47 &micro;s</div>
<div class="mrow" style="top:992px;height:78px"></div>
<div class="mt" style="left:291px;top:1024px">Lock Time</div>
<svg style="left:465px;top:1025px" width="14" height="14" viewBox="0 0 14 14" fill="none" stroke="#d0d0da" stroke-width="1.3"><circle cx="7" cy="7" r="6"/><path d="M7 6.2v4M7 3.6v1.2"/></svg>
<div class="mt" style="left:495px;top:1024px">&lt;0.01 (avg load)</div>
<svg style="left:606px;top:1017px" width="298" height="30" viewBox="0 0 298 30"><rect x="0.000" y="24.10" width="2.533" height="5.90" fill="#b2844c"/><rect x="2.483" y="25.70" width="2.533" height="4.30" fill="#b2844c"/><rect x="4.967" y="23.10" width="2.533" height="6.90" fill="#b2844c"/><rect x="7.450" y="25.70" width="2.533" height="4.30" fill="#b2844c"/><rect x="9.933" y="25.70" width="2.533" height="4.30" fill="#b2844c"/><rect x="12.417" y="25.70" width="2.533" height="4.30" fill="#b2844c"/><rect x="14.900" y="25.70" width="2.533" height="4.30" fill="#b2844c"/><rect x="17.383" y="18.00" width="2.533" height="12.00" fill="#b2844c"/><rect x="19.867" y="24.40" width="2.533" height="5.60" fill="#b2844c"/><rect x="22.350" y="25.70" width="2.533" height="4.30" fill="#b2844c"/><rect x="24.833" y="25.70" width="2.533" height="4.30" fill="#b2844c"/><rect x="27.317" y="5.00" width="2.533" height="25.00" fill="#b2844c"/><rect x="29.800" y="25.70" width="2.533" height="4.30" fill="#b2844c"/><rect x="32.283" y="8.00" width="2.533" height="22.00" fill="#b2844c"/><rect x="34.767" y="25.70" width="2.533" height="4.30" fill="#b2844c"/><rect x="37.250" y="19.20" width="2.533" height="10.80" fill="#b2844c"/><rect x="39.733" y="25.70" width="2.533" height="4.30" fill="#b2844c"/><rect x="42.217" y="20.80" width="2.533" height="9.20" fill="#b2844c"/><rect x="44.700" y="16.00" width="2.533" height="14.00" fill="#b2844c"/><rect x="47.183" y="25.70" width="2.533" height="4.30" fill="#b2844c"/><rect x="49.667" y="25.70" width="2.533" height="4.30" fill="#b2844c"/><rect x="52.150" y="20.20" width="2.533" height="9.80" fill="#b2844c"/><rect x="54.633" y="25.70" width="2.533" height="4.30" fill="#b2844c"/><rect x="57.117" y="23.40" width="2.533" height="6.60" fill="#b2844c"/><rect x="59.600" y="25.70" width="2.533" height="4.30" fill="#b2844c"/><rect x="62.083" y="25.70" width="2.533" height="4.30" fill="#b2844c"/><rect x="64.567" y="23.10" width="2.533" height="6.90" fill="#b2844c"/><rect x="67.050" y="25.70" width="2.533" height="4.30" fill="#b2844c"/><rect x="69.533" y="25.70" width="2.533" height="4.30" fill="#b2844c"/><rect x="72.017" y="15.30" width="2.533" height="14.70" fill="#b2844c"/><rect x="74.500" y="16.00" width="2.533" height="14.00" fill="#b2844c"/><rect x="76.983" y="25.70" width="2.533" height="4.30" fill="#b2844c"/><rect x="79.467" y="25.70" width="2.533" height="4.30" fill="#b2844c"/><rect x="81.950" y="12.00" width="2.533" height="18.00" fill="#b2844c"/><rect x="84.433" y="21.10" width="2.533" height="8.90" fill="#b2844c"/><rect x="86.917" y="24.10" width="2.533" height="5.90" fill="#b2844c"/><rect x="89.400" y="25.70" width="2.533" height="4.30" fill="#b2844c"/><rect x="91.883" y="25.70" width="2.533" height="4.30" fill="#b2844c"/><rect x="94.367" y="24.10" width="2.533" height="5.90" fill="#b2844c"/><rect x="96.850" y="25.70" width="2.533" height="4.30" fill="#b2844c"/><rect x="99.333" y="13.00" width="2.533" height="17.00" fill="#b2844c"/><rect x="101.817" y="25.70" width="2.533" height="4.30" fill="#b2844c"/><rect x="104.300" y="0.00" width="2.533" height="30.00" fill="#b2844c"/><rect x="106.783" y="5.50" width="2.533" height="24.50" fill="#b2844c"/><rect x="109.267" y="25.70" width="2.533" height="4.30" fill="#b2844c"/><rect x="111.750" y="24.40" width="2.533" height="5.60" fill="#b2844c"/><rect x="114.233" y="25.70" width="2.533" height="4.30" fill="#b2844c"/><rect x="116.717" y="25.70" width="2.533" height="4.30" fill="#b2844c"/><rect x="119.200" y="25.70" width="2.533" height="4.30" fill="#b2844c"/><rect x="121.683" y="25.70" width="2.533" height="4.30" fill="#b2844c"/><rect x="124.167" y="20.80" width="2.533" height="9.20" fill="#b2844c"/><rect x="126.650" y="25.70" width="2.533" height="4.30" fill="#b2844c"/><rect x="129.133" y="24.10" width="2.533" height="5.90" fill="#b2844c"/><rect x="131.617" y="25.70" width="2.533" height="4.30" fill="#b2844c"/><rect x="134.100" y="25.70" width="2.533" height="4.30" fill="#b2844c"/><rect x="136.583" y="25.70" width="2.533" height="4.30" fill="#b2844c"/><rect x="139.067" y="25.70" width="2.533" height="4.30" fill="#b2844c"/><rect x="141.550" y="25.70" width="2.533" height="4.30" fill="#b2844c"/><rect x="144.033" y="25.70" width="2.533" height="4.30" fill="#b2844c"/><rect x="146.517" y="8.10" width="2.533" height="21.90" fill="#b2844c"/><rect x="149.000" y="22.10" width="2.533" height="7.90" fill="#b2844c"/><rect x="151.483" y="22.40" width="2.533" height="7.60" fill="#b2844c"/><rect x="153.967" y="25.70" width="2.533" height="4.30" fill="#b2844c"/><rect x="156.450" y="24.10" width="2.533" height="5.90" fill="#b2844c"/><rect x="158.933" y="25.70" width="2.533" height="4.30" fill="#b2844c"/><rect x="161.417" y="25.70" width="2.533" height="4.30" fill="#b2844c"/><rect x="163.900" y="23.40" width="2.533" height="6.60" fill="#b2844c"/><rect x="166.383" y="25.70" width="2.533" height="4.30" fill="#b2844c"/><rect x="168.867" y="25.70" width="2.533" height="4.30" fill="#b2844c"/><rect x="171.350" y="25.70" width="2.533" height="4.30" fill="#b2844c"/><rect x="173.833" y="21.10" width="2.533" height="8.90" fill="#b2844c"/><rect x="176.317" y="25.70" width="2.533" height="4.30" fill="#b2844c"/><rect x="178.800" y="25.70" width="2.533" height="4.30" fill="#b2844c"/><rect x="181.283" y="22.10" width="2.533" height="7.90" fill="#b2844c"/><rect x="183.767" y="19.00" width="2.533" height="11.00" fill="#b2844c"/><rect x="186.250" y="25.70" width="2.533" height="4.30" fill="#b2844c"/><rect x="188.733" y="25.70" width="2.533" height="4.30" fill="#b2844c"/><rect x="191.217" y="25.70" width="2.533" height="4.30" fill="#b2844c"/><rect x="193.700" y="25.70" width="2.533" height="4.30" fill="#b2844c"/><rect x="196.183" y="25.70" width="2.533" height="4.30" fill="#b2844c"/><rect x="198.667" y="25.70" width="2.533" height="4.30" fill="#b2844c"/><rect x="201.150" y="25.70" width="2.533" height="4.30" fill="#b2844c"/><rect x="203.633" y="25.70" width="2.533" height="4.30" fill="#b2844c"/><rect x="206.117" y="18.50" width="2.533" height="11.50" fill="#b2844c"/><rect x="208.600" y="20.80" width="2.533" height="9.20" fill="#b2844c"/><rect x="211.083" y="25.70" width="2.533" height="4.30" fill="#b2844c"/><rect x="213.567" y="25.70" width="2.533" height="4.30" fill="#b2844c"/><rect x="216.050" y="25.70" width="2.533" height="4.30" fill="#b2844c"/><rect x="218.533" y="25.70" width="2.533" height="4.30" fill="#b2844c"/><rect x="221.017" y="25.70" width="2.533" height="4.30" fill="#b2844c"/><rect x="223.500" y="25.70" width="2.533" height="4.30" fill="#b2844c"/><rect x="225.983" y="25.70" width="2.533" height="4.30" fill="#b2844c"/><rect x="228.467" y="21.50" width="2.533" height="8.50" fill="#b2844c"/><rect x="230.950" y="15.00" width="2.533" height="15.00" fill="#b2844c"/><rect x="233.433" y="25.70" width="2.533" height="4.30" fill="#b2844c"/><rect x="235.917" y="25.70" width="2.533" height="4.30" fill="#b2844c"/><rect x="238.400" y="25.70" width="2.533" height="4.30" fill="#b2844c"/><rect x="240.883" y="25.70" width="2.533" height="4.30" fill="#b2844c"/><rect x="243.367" y="25.70" width="2.533" height="4.30" fill="#b2844c"/><rect x="245.850" y="24.40" width="2.533" height="5.60" fill="#b2844c"/><rect x="248.333" y="23.80" width="2.533" height="6.20" fill="#b2844c"/><rect x="250.817" y="25.70" width="2.533" height="4.30" fill="#b2844c"/><rect x="253.300" y="9.00" width="2.533" height="21.00" fill="#b2844c"/><rect x="255.783" y="25.70" width="2.533" height="4.30" fill="#b2844c"/><rect x="258.267" y="25.70" width="2.533" height="4.30" fill="#b2844c"/><rect x="260.750" y="25.70" width="2.533" height="4.30" fill="#b2844c"/><rect x="263.233" y="21.10" width="2.533" height="8.90" fill="#b2844c"/><rect x="265.717" y="25.70" width="2.533" height="4.30" fill="#b2844c"/><rect x="268.200" y="22.10" width="2.533" height="7.90" fill="#b2844c"/><rect x="270.683" y="25.70" width="2.533" height="4.30" fill="#b2844c"/><rect x="273.167" y="20.20" width="2.533" height="9.80" fill="#b2844c"/><rect x="275.650" y="25.70" width="2.533" height="4.30" fill="#b2844c"/><rect x="278.133" y="24.40" width="2.533" height="5.60" fill="#b2844c"/><rect x="280.617" y="25.70" width="2.533" height="4.30" fill="#b2844c"/><rect x="283.100" y="25.70" width="2.533" height="4.30" fill="#b2844c"/><rect x="285.583" y="25.70" width="2.533" height="4.30" fill="#b2844c"/><rect x="288.067" y="25.70" width="2.533" height="4.30" fill="#b2844c"/><rect x="290.550" y="19.50" width="2.533" height="10.50" fill="#b2844c"/><rect x="293.033" y="25.70" width="2.533" height="4.30" fill="#b2844c"/><rect x="295.517" y="24.10" width="2.533" height="5.90" fill="#b2844c"/></svg>
<div class="mt" style="left:923px;top:1000px;line-height:21px;color:#f0f0f0">424.25 ms<br><span style="color:#8592e0;padding-left:5px">100% of total</span><br><span style="color:#c28f58">0.04% of query time</span></div>
<div class="mt" style="left:1102px;top:1024px">&lt;0.06 &micro;s</div>
<div class="mrow" style="top:1070px;height:57px"></div>
<div class="mt" style="left:291px;top:1091px">Rows Sent</div>
<svg style="left:465px;top:1092px" width="14" height="14" viewBox="0 0 14 14" fill="none" stroke="#d0d0da" stroke-width="1.3"><circle cx="7" cy="7" r="6"/><path d="M7 6.2v4M7 3.6v1.2"/></svg>
<div class="mt" style="left:495px;top:1091px">666.35 (per sec)</div>
<svg style="left:606px;top:1084px" width="298" height="30" viewBox="0 0 298 30"><rect x="0.000" y="12.38" width="2.554" height="17.62" fill="#b2844c"/><rect x="2.504" y="14.92" width="2.554" height="15.08" fill="#b2844c"/><rect x="5.008" y="0.15" width="2.554" height="29.85" fill="#b2844c"/><rect x="7.513" y="24.44" width="2.554" height="5.56" fill="#b2844c"/><rect x="10.017" y="3.37" width="2.554" height="26.63" fill="#b2844c"/><rect x="12.521" y="12.68" width="2.554" height="17.32" fill="#b2844c"/><rect x="15.025" y="14.53" width="2.554" height="15.47" fill="#b2844c"/><rect x="17.529" y="1.30" width="2.554" height="28.70" fill="#b2844c"/><rect x="20.034" y="25.47" width="2.554" height="4.53" fill="#b2844c"/><rect x="22.538" y="3.42" width="2.554" height="26.58" fill="#b2844c"/><rect x="25.042" y="12.36" width="2.554" height="17.64" fill="#b2844c"/><rect x="27.546" y="15.43" width="2.554" height="14.57" fill="#b2844c"/><rect x="30.050" y="0.54" width="2.554" height="29.46" fill="#b2844c"/><rect x="32.555" y="24.53" width="2.554" height="5.47" fill="#b2844c"/><rect x="35.059" y="3.65" width="2.554" height="26.35" fill="#b2844c"/><rect x="37.563" y="12.58" width="2.554" height="17.42" fill="#b2844c"/><rect x="40.067" y="15.33" width="2.554" height="14.67" fill="#b2844c"/><rect x="42.571" y="0.95" width="2.554" height="29.05" fill="#b2844c"/><rect x="45.076" y="24.43" width="2.554" height="5.57" fill="#b2844c"/><rect x="47.580" y="3.64" width="2.554" height="26.36" fill="#b2844c"/><rect x="50.084" y="11.95" width="2.554" height="18.05" fill="#b2844c"/><rect x="52.588" y="14.50" width="2.554" height="15.50" fill="#b2844c"/><rect x="55.092" y="0.59" width="2.554" height="29.41" fill="#b2844c"/><rect x="57.597" y="25.29" width="2.554" height="4.71" fill="#b2844c"/><rect x="60.101" y="2.92" width="2.554" height="27.08" fill="#b2844c"/><rect x="62.605" y="12.50" width="2.554" height="17.50" fill="#b2844c"/><rect x="65.109" y="15.10" width="2.554" height="14.90" fill="#b2844c"/><rect x="67.613" y="0.92" width="2.554" height="29.08" fill="#b2844c"/><rect x="70.118" y="24.42" width="2.554" height="5.58" fill="#b2844c"/><rect x="72.622" y="3.51" width="2.554" height="26.49" fill="#b2844c"/><rect x="75.126" y="12.76" width="2.554" height="17.24" fill="#b2844c"/><rect x="77.630" y="15.03" width="2.554" height="14.97" fill="#b2844c"/><rect x="80.134" y="1.15" width="2.554" height="28.85" fill="#b2844c"/><rect x="82.639" y="24.85" width="2.554" height="5.15" fill="#b2844c"/><rect x="85.143" y="3.57" width="2.554" height="26.43" fill="#b2844c"/><rect x="87.647" y="12.75" width="2.554" height="17.25" fill="#b2844c"/><rect x="90.151" y="14.66" width="2.554" height="15.34" fill="#b2844c"/><rect x="92.655" y="0.31" width="2.554" height="29.69" fill="#b2844c"/><rect x="95.160" y="25.58" width="2.554" height="4.42" fill="#b2844c"/><rect x="97.664" y="3.46" width="2.554" height="26.54" fill="#b2844c"/><rect x="100.168" y="12.77" width="2.554" height="17.23" fill="#b2844c"/><rect x="102.672" y="14.48" width="2.554" height="15.52" fill="#b2844c"/><rect x="105.176" y="0.36" width="2.554" height="29.64" fill="#b2844c"/><rect x="107.681" y="25.31" width="2.554" height="4.69" fill="#b2844c"/><rect x="110.185" y="3.78" width="2.554" height="26.22" fill="#b2844c"/><rect x="112.689" y="12.91" width="2.554" height="17.09" fill="#b2844c"/><rect x="115.193" y="14.41" width="2.554" height="15.59" fill="#b2844c"/><rect x="117.697" y="0.95" width="2.554" height="29.05" fill="#b2844c"/><rect x="120.202" y="24.87" width="2.554" height="5.13" fill="#b2844c"/><rect x="122.706" y="3.53" width="2.554" height="26.47" fill="#b2844c"/><rect x="125.210" y="12.33" width="2.554" height="17.67" fill="#b2844c"/><rect x="127.714" y="14.88" width="2.554" height="15.12" fill="#b2844c"/><rect x="130.218" y="0.41" width="2.554" height="29.59" fill="#b2844c"/><rect x="132.723" y="25.46" width="2.554" height="4.54" fill="#b2844c"/><rect x="135.227" y="3.19" width="2.554" height="26.81" fill="#b2844c"/><rect x="137.731" y="12.74" width="2.554" height="17.26" fill="#b2844c"/><rect x="140.235" y="14.96" width="2.554" height="15.04" fill="#b2844c"/><rect x="142.739" y="0.90" width="2.554" height="29.10" fill="#b2844c"/><rect x="145.244" y="25.24" width="2.554" height="4.76" fill="#b2844c"/><rect x="147.748" y="3.46" width="2.554" height="26.54" fill="#b2844c"/><rect x="150.252" y="12.54" width="2.554" height="17.46" fill="#b2844c"/><rect x="152.756" y="15.17" width="2.554" height="14.83" fill="#b2844c"/><rect x="155.261" y="0.41" width="2.554" height="29.59" fill="#b2844c"/><rect x="157.765" y="24.89" width="2.554" height="5.11" fill="#b2844c"/><rect x="160.269" y="4.06" width="2.554" height="25.94" fill="#b2844c"/><rect x="162.773" y="12.80" width="2.554" height="17.20" fill="#b2844c"/><rect x="165.277" y="15.05" width="2.554" height="14.95" fill="#b2844c"/><rect x="167.782" y="0.20" width="2.554" height="29.80" fill="#b2844c"/><rect x="170.286" y="24.53" width="2.554" height="5.47" fill="#b2844c"/><rect x="172.790" y="3.45" width="2.554" height="26.55" fill="#b2844c"/><rect x="175.294" y="13.08" width="2.554" height="16.92" fill="#b2844c"/><rect x="177.798" y="14.67" width="2.554" height="15.33" fill="#b2844c"/><rect x="180.303" y="0.79" width="2.554" height="29.21" fill="#b2844c"/><rect x="182.807" y="24.91" width="2.554" height="5.09" fill="#b2844c"/><rect x="185.311" y="3.25" width="2.554" height="26.75" fill="#b2844c"/><rect x="187.815" y="12.34" width="2.554" height="17.66" fill="#b2844c"/><rect x="190.319" y="15.02" width="2.554" height="14.98" fill="#b2844c"/><rect x="192.824" y="0.21" width="2.554" height="29.79" fill="#b2844c"/><rect x="195.328" y="25.14" width="2.554" height="4.86" fill="#b2844c"/><rect x="197.832" y="3.63" width="2.554" height="26.37" fill="#b2844c"/><rect x="200.336" y="12.08" width="2.554" height="17.92" fill="#b2844c"/><rect x="202.840" y="15.36" width="2.554" height="14.64" fill="#b2844c"/><rect x="205.345" y="0.94" width="2.554" height="29.06" fill="#b2844c"/><rect x="207.849" y="24.60" width="2.554" height="5.40" fill="#b2844c"/><rect x="210.353" y="4.02" width="2.554" height="25.98" fill="#b2844c"/><rect x="212.857" y="12.10" width="2.554" height="17.90" fill="#b2844c"/><rect x="215.361" y="14.77" width="2.554" height="15.23" fill="#b2844c"/><rect x="217.866" y="0.78" width="2.554" height="29.22" fill="#b2844c"/><rect x="220.370" y="25.26" width="2.554" height="4.74" fill="#b2844c"/><rect x="222.874" y="3.16" width="2.554" height="26.84" fill="#b2844c"/><rect x="225.378" y="12.01" width="2.554" height="17.99" fill="#b2844c"/><rect x="227.882" y="15.43" width="2.554" height="14.57" fill="#b2844c"/><rect x="230.387" y="0.73" width="2.554" height="29.27" fill="#b2844c"/><rect x="232.891" y="24.94" width="2.554" height="5.06" fill="#b2844c"/><rect x="235.395" y="3.50" width="2.554" height="26.50" fill="#b2844c"/><rect x="237.899" y="12.70" width="2.554" height="17.30" fill="#b2844c"/><rect x="240.403" y="15.42" width="2.554" height="14.58" fill="#b2844c"/><rect x="242.908" y="0.60" width="2.554" height="29.40" fill="#b2844c"/><rect x="245.412" y="24.63" width="2.554" height="5.37" fill="#b2844c"/><rect x="247.916" y="4.02" width="2.554" height="25.98" fill="#b2844c"/><rect x="250.420" y="12.82" width="2.554" height="17.18" fill="#b2844c"/><rect x="252.924" y="14.62" width="2.554" height="15.38" fill="#b2844c"/><rect x="255.429" y="0.35" width="2.554" height="29.65" fill="#b2844c"/><rect x="257.933" y="24.80" width="2.554" height="5.20" fill="#b2844c"/><rect x="260.437" y="4.07" width="2.554" height="25.93" fill="#b2844c"/><rect x="262.941" y="12.23" width="2.554" height="17.77" fill="#b2844c"/><rect x="265.445" y="14.43" width="2.554" height="15.57" fill="#b2844c"/><rect x="267.950" y="0.10" width="2.554" height="29.90" fill="#b2844c"/><rect x="270.454" y="24.76" width="2.554" height="5.24" fill="#b2844c"/><rect x="272.958" y="4.04" width="2.554" height="25.96" fill="#b2844c"/><rect x="275.462" y="12.09" width="2.554" height="17.91" fill="#b2844c"/><rect x="277.966" y="15.34" width="2.554" height="14.66" fill="#b2844c"/><rect x="280.471" y="0.53" width="2.554" height="29.47" fill="#b2844c"/><rect x="282.975" y="24.46" width="2.554" height="5.54" fill="#b2844c"/><rect x="285.479" y="3.25" width="2.554" height="26.75" fill="#b2844c"/><rect x="287.983" y="12.94" width="2.554" height="17.06" fill="#b2844c"/><rect x="290.487" y="15.25" width="2.554" height="14.75" fill="#b2844c"/><rect x="292.992" y="0.20" width="2.554" height="29.80" fill="#b2844c"/><rect x="295.496" y="25.42" width="2.554" height="4.58" fill="#b2844c"/></svg>
<div class="mt" style="left:923px;top:1078px;line-height:21px;color:#f0f0f0">28.79m<br><span style="color:#8592e0;padding-left:5px">100% of total</span></div>
<div class="mt" style="left:1102px;top:1091px">4.10</div>
<div class="mrow" style="top:1127px;height:78px"></div>
<div class="mt" style="left:291px;top:1159px">Rows Examined</div>
<svg style="left:465px;top:1160px" width="14" height="14" viewBox="0 0 14 14" fill="none" stroke="#d0d0da" stroke-width="1.3"><circle cx="7" cy="7" r="6"/><path d="M7 6.2v4M7 3.6v1.2"/></svg>
<div class="mt" style="left:495px;top:1159px">394.99 (per sec)</div>
<svg style="left:606px;top:1152px" width="298" height="30" viewBox="0 0 298 30"><rect x="0" y="0" width="298" height="30" fill="#b2844c"/><rect x="4.62" y="0" width="0.7" height="30" fill="#8e6c42"/><rect x="9.58" y="0" width="0.7" height="30" fill="#8e6c42"/><rect x="14.55" y="0" width="0.7" height="30" fill="#8e6c42"/><rect x="19.52" y="0" width="0.7" height="30" fill="#8e6c42"/><rect x="24.48" y="0" width="0.7" height="30" fill="#8e6c42"/><rect x="29.45" y="0" width="0.7" height="30" fill="#8e6c42"/><rect x="34.42" y="0" width="0.7" height="30" fill="#8e6c42"/><rect x="39.38" y="0" width="0.7" height="30" fill="#8e6c42"/><rect x="44.35" y="0" width="0.7" height="30" fill="#8e6c42"/><rect x="49.32" y="0" width="0.7" height="30" fill="#8e6c42"/><rect x="54.28" y="0" width="0.7" height="30" fill="#8e6c42"/><rect x="59.25" y="0" width="0.7" height="30" fill="#8e6c42"/><rect x="64.22" y="0" width="0.7" height="30" fill="#8e6c42"/><rect x="69.18" y="0" width="0.7" height="30" fill="#8e6c42"/><rect x="74.15" y="0" width="0.7" height="30" fill="#8e6c42"/><rect x="79.12" y="0" width="0.7" height="30" fill="#8e6c42"/><rect x="84.08" y="0" width="0.7" height="30" fill="#8e6c42"/><rect x="89.05" y="0" width="0.7" height="30" fill="#8e6c42"/><rect x="94.02" y="0" width="0.7" height="30" fill="#8e6c42"/><rect x="98.98" y="0" width="0.7" height="30" fill="#8e6c42"/><rect x="103.95" y="0" width="0.7" height="30" fill="#8e6c42"/><rect x="108.92" y="0" width="0.7" height="30" fill="#8e6c42"/><rect x="113.88" y="0" width="0.7" height="30" fill="#8e6c42"/><rect x="118.85" y="0" width="0.7" height="30" fill="#8e6c42"/><rect x="123.82" y="0" width="0.7" height="30" fill="#8e6c42"/><rect x="128.78" y="0" width="0.7" height="30" fill="#8e6c42"/><rect x="133.75" y="0" width="0.7" height="30" fill="#8e6c42"/><rect x="138.72" y="0" width="0.7" height="30" fill="#8e6c42"/><rect x="143.68" y="0" width="0.7" height="30" fill="#8e6c42"/><rect x="148.65" y="0" width="0.7" height="30" fill="#8e6c42"/><rect x="153.62" y="0" width="0.7" height="30" fill="#8e6c42"/><rect x="158.58" y="0" width="0.7" height="30" fill="#8e6c42"/><rect x="163.55" y="0" width="0.7" height="30" fill="#8e6c42"/><rect x="168.52" y="0" width="0.7" height="30" fill="#8e6c42"/><rect x="173.48" y="0" width="0.7" height="30" fill="#8e6c42"/><rect x="178.45" y="0" width="0.7" height="30" fill="#8e6c42"/><rect x="183.42" y="0" width="0.7" height="30" fill="#8e6c42"/><rect x="188.38" y="0" width="0.7" height="30" fill="#8e6c42"/><rect x="193.35" y="0" width="0.7" height="30" fill="#8e6c42"/><rect x="198.32" y="0" width="0.7" height="30" fill="#8e6c42"/><rect x="203.28" y="0" width="0.7" height="30" fill="#8e6c42"/><rect x="208.25" y="0" width="0.7" height="30" fill="#8e6c42"/><rect x="213.22" y="0" width="0.7" height="30" fill="#8e6c42"/><rect x="218.18" y="0" width="0.7" height="30" fill="#8e6c42"/><rect x="223.15" y="0" width="0.7" height="30" fill="#8e6c42"/><rect x="228.12" y="0" width="0.7" height="30" fill="#8e6c42"/><rect x="233.08" y="0" width="0.7" height="30" fill="#8e6c42"/><rect x="238.05" y="0" width="0.7" height="30" fill="#8e6c42"/><rect x="243.02" y="0" width="0.7" height="30" fill="#8e6c42"/><rect x="247.98" y="0" width="0.7" height="30" fill="#8e6c42"/><rect x="252.95" y="0" width="0.7" height="30" fill="#8e6c42"/><rect x="257.92" y="0" width="0.7" height="30" fill="#8e6c42"/><rect x="262.88" y="0" width="0.7" height="30" fill="#8e6c42"/><rect x="267.85" y="0" width="0.7" height="30" fill="#8e6c42"/><rect x="272.82" y="0" width="0.7" height="30" fill="#8e6c42"/><rect x="277.78" y="0" width="0.7" height="30" fill="#8e6c42"/><rect x="282.75" y="0" width="0.7" height="30" fill="#8e6c42"/><rect x="287.72" y="0" width="0.7" height="30" fill="#8e6c42"/><rect x="292.68" y="0" width="0.7" height="30" fill="#8e6c42"/></svg>
<div class="mt" style="left:923px;top:1135px;line-height:21px;color:#f0f0f0">17.06m<br><span style="color:#8592e0;padding-left:5px">100% of total</span><br><span style="color:#c28f58">0.59 per row sent</span></div>
<div class="mt" style="left:1102px;top:1159px">2.43</div>
<div class="mrow" style="top:1205px;height:57px"></div>
<div class="mt" style="left:291px;top:1226px">System CPU time</div>
<svg style="left:465px;top:1227px" width="14" height="14" viewBox="0 0 14 14" fill="none" stroke="#d0d0da" stroke-width="1.3"><circle cx="7" cy="7" r="6"/><path d="M7 6.2v4M7 3.6v1.2"/></svg>
<div class="mt" style="left:495px;top:1226px">&lt;0.01 (avg load)</div>
<svg style="left:606px;top:1219px" width="298" height="30" viewBox="0 0 298 30"><rect x="0.000" y="12.37" width="2.554" height="17.63" fill="#b2844c"/><rect x="2.504" y="15.10" width="2.554" height="14.90" fill="#b2844c"/><rect x="5.008" y="1.11" width="2.554" height="28.89" fill="#b2844c"/><rect x="7.513" y="24.85" width="2.554" height="5.15" fill="#b2844c"/><rect x="10.017" y="4.05" width="2.554" height="25.95" fill="#b2844c"/><rect x="12.521" y="12.97" width="2.554" height="17.03" fill="#b2844c"/><rect x="15.025" y="15.14" width="2.554" height="14.86" fill="#b2844c"/><rect x="17.529" y="1.21" width="2.554" height="28.79" fill="#b2844c"/><rect x="20.034" y="25.53" width="2.554" height="4.47" fill="#b2844c"/><rect x="22.538" y="3.41" width="2.554" height="26.59" fill="#b2844c"/><rect x="25.042" y="12.21" width="2.554" height="17.79" fill="#b2844c"/><rect x="27.546" y="14.55" width="2.554" height="15.45" fill="#b2844c"/><rect x="30.050" y="1.14" width="2.554" height="28.86" fill="#b2844c"/><rect x="32.555" y="25.08" width="2.554" height="4.92" fill="#b2844c"/><rect x="35.059" y="3.72" width="2.554" height="26.28" fill="#b2844c"/><rect x="37.563" y="12.38" width="2.554" height="17.62" fill="#b2844c"/><rect x="40.067" y="15.01" width="2.554" height="14.99" fill="#b2844c"/><rect x="42.571" y="0.17" width="2.554" height="29.83" fill="#b2844c"/><rect x="45.076" y="25.15" width="2.554" height="4.85" fill="#b2844c"/><rect x="47.580" y="4.03" width="2.554" height="25.97" fill="#b2844c"/><rect x="50.084" y="12.26" width="2.554" height="17.74" fill="#b2844c"/><rect x="52.588" y="15.42" width="2.554" height="14.58" fill="#b2844c"/><rect x="55.092" y="0.54" width="2.554" height="29.46" fill="#b2844c"/><rect x="57.597" y="24.99" width="2.554" height="5.01" fill="#b2844c"/><rect x="60.101" y="3.01" width="2.554" height="26.99" fill="#b2844c"/><rect x="62.605" y="12.43" width="2.554" height="17.57" fill="#b2844c"/><rect x="65.109" y="14.85" width="2.554" height="15.15" fill="#b2844c"/><rect x="67.613" y="0.98" width="2.554" height="29.02" fill="#b2844c"/><rect x="70.118" y="24.94" width="2.554" height="5.06" fill="#b2844c"/><rect x="72.622" y="3.79" width="2.554" height="26.21" fill="#b2844c"/><rect x="75.126" y="12.20" width="2.554" height="17.80" fill="#b2844c"/><rect x="77.630" y="14.98" width="2.554" height="15.02" fill="#b2844c"/><rect x="80.134" y="1.14" width="2.554" height="28.86" fill="#b2844c"/><rect x="82.639" y="25.32" width="2.554" height="4.68" fill="#b2844c"/><rect x="85.143" y="3.65" width="2.554" height="26.35" fill="#b2844c"/><rect x="87.647" y="12.22" width="2.554" height="17.78" fill="#b2844c"/><rect x="90.151" y="15.38" width="2.554" height="14.62" fill="#b2844c"/><rect x="92.655" y="0.44" width="2.554" height="29.56" fill="#b2844c"/><rect x="95.160" y="24.81" width="2.554" height="5.19" fill="#b2844c"/><rect x="97.664" y="4.00" width="2.554" height="26.00" fill="#b2844c"/><rect x="100.168" y="12.30" width="2.554" height="17.70" fill="#b2844c"/><rect x="102.672" y="15.49" width="2.554" height="14.51" fill="#b2844c"/><rect x="105.176" y="1.15" width="2.554" height="28.85" fill="#b2844c"/><rect x="107.681" y="24.89" width="2.554" height="5.11" fill="#b2844c"/><rect x="110.185" y="3.81" width="2.554" height="26.19" fill="#b2844c"/><rect x="112.689" y="12.05" width="2.554" height="17.95" fill="#b2844c"/><rect x="115.193" y="15.02" width="2.554" height="14.98" fill="#b2844c"/><rect x="117.697" y="0.91" width="2.554" height="29.09" fill="#b2844c"/><rect x="120.202" y="24.64" width="2.554" height="5.36" fill="#b2844c"/><rect x="122.706" y="4.06" width="2.554" height="25.94" fill="#b2844c"/><rect x="125.210" y="12.23" width="2.554" height="17.77" fill="#b2844c"/><rect x="127.714" y="15.54" width="2.554" height="14.46" fill="#b2844c"/><rect x="130.218" y="1.12" width="2.554" height="28.88" fill="#b2844c"/><rect x="132.723" y="24.46" width="2.554" height="5.54" fill="#b2844c"/><rect x="135.227" y="3.28" width="2.554" height="26.72" fill="#b2844c"/><rect x="137.731" y="12.83" width="2.554" height="17.17" fill="#b2844c"/><rect x="140.235" y="15.46" width="2.554" height="14.54" fill="#b2844c"/><rect x="142.739" y="0.13" width="2.554" height="29.87" fill="#b2844c"/><rect x="145.244" y="24.80" width="2.554" height="5.20" fill="#b2844c"/><rect x="147.748" y="3.12" width="2.554" height="26.88" fill="#b2844c"/><rect x="150.252" y="12.93" width="2.554" height="17.07" fill="#b2844c"/><rect x="152.756" y="14.85" width="2.554" height="15.15" fill="#b2844c"/><rect x="155.261" y="0.87" width="2.554" height="29.13" fill="#b2844c"/><rect x="157.765" y="25.32" width="2.554" height="4.68" fill="#b2844c"/><rect x="160.269" y="3.70" width="2.554" height="26.30" fill="#b2844c"/><rect x="162.773" y="12.36" width="2.554" height="17.64" fill="#b2844c"/><rect x="165.277" y="15.18" width="2.554" height="14.82" fill="#b2844c"/><rect x="167.782" y="0.84" width="2.554" height="29.16" fill="#b2844c"/><rect x="170.286" y="25.44" width="2.554" height="4.56" fill="#b2844c"/><rect x="172.790" y="3.10" width="2.554" height="26.90" fill="#b2844c"/><rect x="175.294" y="12.32" width="2.554" height="17.68" fill="#b2844c"/><rect x="177.798" y="14.63" width="2.554" height="15.37" fill="#b2844c"/><rect x="180.303" y="0.78" width="2.554" height="29.22" fill="#b2844c"/><rect x="182.807" y="24.58" width="2.554" height="5.42" fill="#b2844c"/><rect x="185.311" y="3.48" width="2.554" height="26.52" fill="#b2844c"/><rect x="187.815" y="12.39" width="2.554" height="17.61" fill="#b2844c"/><rect x="190.319" y="14.91" width="2.554" height="15.09" fill="#b2844c"/><rect x="192.824" y="0.41" width="2.554" height="29.59" fill="#b2844c"/><rect x="195.328" y="25.13" width="2.554" height="4.87" fill="#b2844c"/><rect x="197.832" y="3.98" width="2.554" height="26.02" fill="#b2844c"/><rect x="200.336" y="13.06" width="2.554" height="16.94" fill="#b2844c"/><rect x="202.840" y="15.36" width="2.554" height="14.64" fill="#b2844c"/><rect x="205.345" y="1.25" width="2.554" height="28.75" fill="#b2844c"/><rect x="207.849" y="24.53" width="2.554" height="5.47" fill="#b2844c"/><rect x="210.353" y="3.52" width="2.554" height="26.48" fill="#b2844c"/><rect x="212.857" y="12.19" width="2.554" height="17.81" fill="#b2844c"/><rect x="215.361" y="15.60" width="2.554" height="14.40" fill="#b2844c"/><rect x="217.866" y="0.74" width="2.554" height="29.26" fill="#b2844c"/><rect x="220.370" y="24.53" width="2.554" height="5.47" fill="#b2844c"/><rect x="222.874" y="3.36" width="2.554" height="26.64" fill="#b2844c"/><rect x="225.378" y="12.59" width="2.554" height="17.41" fill="#b2844c"/><rect x="227.882" y="15.04" width="2.554" height="14.96" fill="#b2844c"/><rect x="230.387" y="1.18" width="2.554" height="28.82" fill="#b2844c"/><rect x="232.891" y="25.41" width="2.554" height="4.59" fill="#b2844c"/><rect x="235.395" y="3.91" width="2.554" height="26.09" fill="#b2844c"/><rect x="237.899" y="12.65" width="2.554" height="17.35" fill="#b2844c"/><rect x="240.403" y="15.14" width="2.554" height="14.86" fill="#b2844c"/><rect x="242.908" y="0.24" width="2.554" height="29.76" fill="#b2844c"/><rect x="245.412" y="25.42" width="2.554" height="4.58" fill="#b2844c"/><rect x="247.916" y="3.80" width="2.554" height="26.20" fill="#b2844c"/><rect x="250.420" y="12.77" width="2.554" height="17.23" fill="#b2844c"/><rect x="252.924" y="15.41" width="2.554" height="14.59" fill="#b2844c"/><rect x="255.429" y="0.96" width="2.554" height="29.04" fill="#b2844c"/><rect x="257.933" y="25.32" width="2.554" height="4.68" fill="#b2844c"/><rect x="260.437" y="3.52" width="2.554" height="26.48" fill="#b2844c"/><rect x="262.941" y="13.06" width="2.554" height="16.94" fill="#b2844c"/><rect x="265.445" y="14.49" width="2.554" height="15.51" fill="#b2844c"/><rect x="267.950" y="0.86" width="2.554" height="29.14" fill="#b2844c"/><rect x="270.454" y="24.47" width="2.554" height="5.53" fill="#b2844c"/><rect x="272.958" y="3.27" width="2.554" height="26.73" fill="#b2844c"/><rect x="275.462" y="12.29" width="2.554" height="17.71" fill="#b2844c"/><rect x="277.966" y="15.03" width="2.554" height="14.97" fill="#b2844c"/><rect x="280.471" y="0.17" width="2.554" height="29.83" fill="#b2844c"/><rect x="282.975" y="25.46" width="2.554" height="4.54" fill="#b2844c"/><rect x="285.479" y="3.30" width="2.554" height="26.70" fill="#b2844c"/><rect x="287.983" y="12.75" width="2.554" height="17.25" fill="#b2844c"/><rect x="290.487" y="14.79" width="2.554" height="15.21" fill="#b2844c"/><rect x="292.992" y="0.42" width="2.554" height="29.58" fill="#b2844c"/><rect x="295.496" y="25.40" width="2.554" height="4.60" fill="#b2844c"/></svg>
<div class="mt" style="left:923px;top:1213px;line-height:21px;color:#f0f0f0">228.83 ms<br><span style="color:#8592e0;padding-left:5px">100% of total</span></div>
<div class="mt" style="left:1102px;top:1226px">&lt;0.03 &micro;s</div>
<div class="mrow" style="top:1262px;height:57px"></div>
<div class="a" style="left:487px;top:765px;width:1px;height:510px;background:#2a2b2e"></div>
<div class="a" style="left:916px;top:765px;width:1px;height:510px;background:#2a2b2e"></div>
<div class="a" style="left:1094px;top:765px;width:1px;height:510px;background:#2a2b2e"></div>
<div class="a" style="left:1204px;top:765px;width:1px;height:510px;background:#2a2b2e"></div>
<div class="a" style="left:541px;top:53px;width:546px;height:430px;background:#1b1c20;border:1px solid #2a2c31;border-radius:2px;box-shadow:0 4px 16px rgba(0,0,0,.5)"></div>
<div class="a" style="left:553px;top:63px;font-size:14px;font-weight:bold;color:#d8d9e3;letter-spacing:-0.45px">Absolute time range</div>
<div class="a" style="left:553px;top:90px;font-size:12px;font-weight:bold;color:#d8d9e3">From</div>
<div class="a" style="left:553px;top:109px;width:195px;height:32px;border:1px solid #25272c;background:#0d0e11;border-radius:2px"></div>
<div class="a" style="left:716px;top:109px;width:32px;height:32px;background:#333439"></div>
<svg style="left:725px;top:118px" width="14" height="15" viewBox="0 0 14 15" fill="none" stroke="#d0d0da" stroke-width="1.3"><rect x="1" y="2.6" width="12" height="11.4" rx="2"/><path d="M4.2 0.8v3.4M9.8 0.8v3.4M1.5 5.6h11"/><path d="M3.6 8.4h1.2M6.4 8.4h1.2M9.2 8.4h1.2M3.6 11h1.2M6.4 11h1.2M9.2 11h1.2" stroke-width="1.4"/></svg>
<div class="a" style="left:562px;top:117px;font-size:14px;color:#d8d9e3">now-12h</div>
<div class="a" style="left:553px;top:157px;font-size:12px;font-weight:bold;color:#d8d9e3">To</div>
<div class="a" style="left:553px;top:176px;width:195px;height:32px;border:1px solid #25272c;background:#0d0e11;border-radius:2px"></div>
<div class="a" style="left:716px;top:176px;width:32px;height:32px;background:#333439"></div>
<svg style="left:725px;top:185px" width="14" height="15" viewBox="0 0 14 15" fill="none" stroke="#d0d0da" stroke-width="1.3"><rect x="1" y="2.6" width="12" height="11.4" rx="2"/><path d="M4.2 0.8v3.4M9.8 0.8v3.4M1.5 5.6h11"/><path d="M3.6 8.4h1.2M6.4 8.4h1.2M9.2 8.4h1.2M3.6 11h1.2M6.4 11h1.2M9.2 11h1.2" stroke-width="1.4"/></svg>
<div class="a" style="left:562px;top:184px;font-size:14px;color:#d8d9e3">now</div>
<div class="a" style="left:553px;top:224px;width:140px;height:32px;background:#4774d4;border-radius:2px"></div>
<div class="a" style="left:569px;top:232px;font-size:14px;font-weight:bold;color:#fff;letter-spacing:-0.35px">Apply time range</div>
<div class="a" style="left:566px;top:288px;font-size:13px;line-height:21px;color:#d0d0da;letter-spacing:0.15px">It looks like you haven't used this time picker<br>before. As soon as you enter some time<br>intervals, recently used intervals will appear<br>here.<br><span style="color:#6e9fff">Read the documentation</span> to find out more<br>about how to enter custom time ranges.</div>
<div class="a" style="left:867px;top:54px;width:1px;height:382px;background:#2a2c31"></div>
<div class="a" style="left:872px;top:58px;width:210px;height:39px;border:2px solid #3d71d9;border-radius:4px;background:#0e0f12;box-shadow:inset 0 0 0 1px #111217,inset 0 0 0 2px #2b2d32"></div>
<svg style="left:884px;top:70px" width="15" height="15" viewBox="0 0 15 15" fill="none" stroke="#b8b8c4" stroke-width="1.4"><circle cx="6.5" cy="6.5" r="5.2"/><path d="M10.5 10.5l3.5 3.5"/></svg>
<div class="a" style="left:905px;top:69px;width:1px;height:18px;background:#d8d9e3"></div>
<div class="a" style="left:906px;top:70px;font-size:14px;color:#8e8e99;letter-spacing:-0.15px">Search quick ranges</div>
<div class="a" style="left:868px;top:312px;width:218px;height:35px;background:#2c2e33"></div>
<div class="a" style="left:869px;top:100px;width:217px;height:335px;overflow:hidden">
<div class="a" style="left:8px;top:11px;font-size:14px;color:#d8d9e3;letter-spacing:0.15px;">Last 5 minutes</div>
<div class="a" style="left:8px;top:46px;font-size:14px;color:#d8d9e3;letter-spacing:0.15px;">Last 15 minutes</div>
<div class="a" style="left:8px;top:81px;font-size:14px;color:#d8d9e3;letter-spacing:0.15px;">Last 30 minutes</div>
<div class="a" style="left:8px;top:116px;font-size:14px;color:#d8d9e3;letter-spacing:0.15px;">Last 1 hour</div>
<div class="a" style="left:8px;top:151px;font-size:14px;color:#d8d9e3;letter-spacing:0.15px;">Last 3 hours</div>
<div class="a" style="left:8px;top:186px;font-size:14px;color:#d8d9e3;letter-spacing:0.15px;">Last 6 hours</div>
<div class="a" style="left:8px;top:221px;font-size:14px;color:#d8d9e3;letter-spacing:0.15px;font-weight:bold;letter-spacing:-0.25px;">Last 12 hours</div>
<div class="a" style="left:8px;top:256px;font-size:14px;color:#d8d9e3;letter-spacing:0.15px;">Last 24 hours</div>
<div class="a" style="left:8px;top:291px;font-size:14px;color:#d8d9e3;letter-spacing:0.15px;">Last 2 days</div>
<div class="a" style="left:8px;top:326px;font-size:14px;color:#d8d9e3;letter-spacing:0.15px;">Last 7 days</div>
</div>
<div class="a" style="left:541px;top:435px;width:546px;height:1px;background:#2a2c31"></div>
<div class="a" style="left:553px;top:451px;font-size:14px;color:#d8d9e3">Browser Time</div>
<div class="a" style="left:647px;top:453px;font-size:12px;color:#9a9aa6">IST</div>
<div class="a" style="left:865px;top:448px;width:70px;height:22px;background:#22252b;border-radius:2px;font-size:12px;color:#d8d9e3;text-align:center;line-height:22px">UTC+05:30</div>
<div class="a" style="left:942px;top:447px;width:133px;height:24px;background:#34363c;border-radius:2px;font-size:12px;font-weight:bold;color:#d8d9e3;text-align:center;line-height:24px;letter-spacing:-0.2px">Change time settings</div>
<div class="a" style="left:0;top:1267px;width:1229px;height:13px;background:#000;border-top:1px solid #3a3b40"></div>
<svg style="left:1189px;top:1258px" width="40" height="10" viewBox="0 0 40 10"><path d="M0 9.5 Q30 9.5 40 6 V10 H0z" fill="#000"/><path d="M0 9 Q30 9 40 5.5" fill="none" stroke="#3a3b40" stroke-width="1"/></svg>
</body></html>
